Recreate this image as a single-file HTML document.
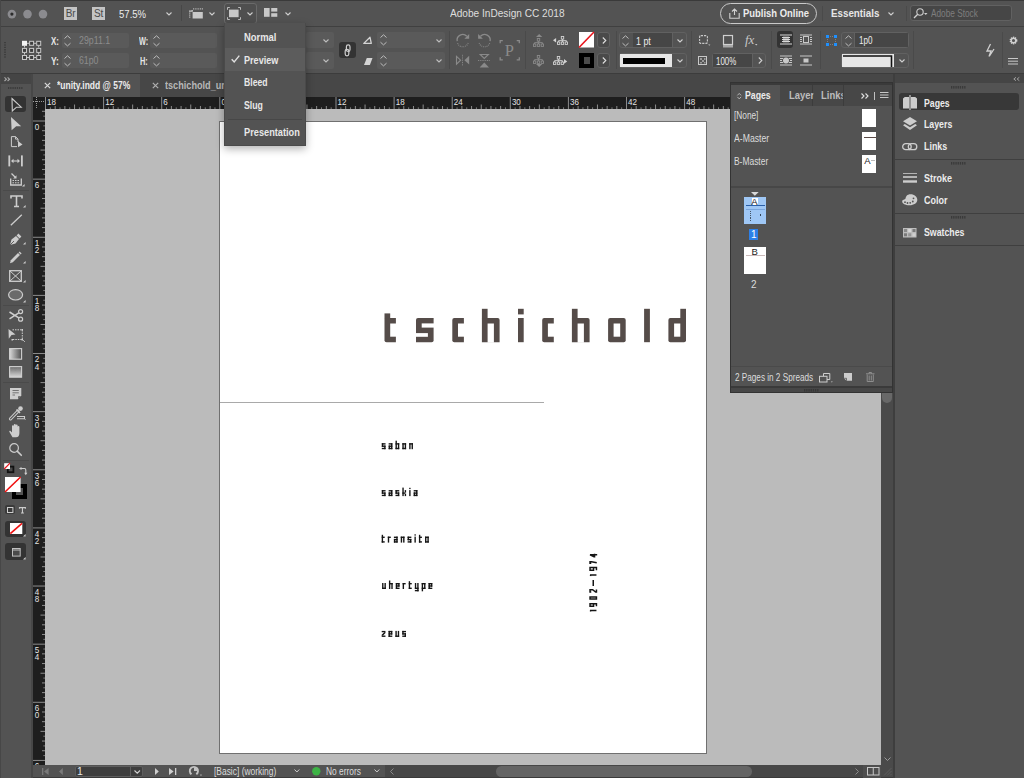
<!DOCTYPE html><html><head><meta charset="utf-8"><style>
*{margin:0;padding:0;box-sizing:border-box}
html,body{width:1024px;height:778px;overflow:hidden;background:#535353;font-family:"Liberation Sans",sans-serif;}
div{position:absolute}
svg{position:absolute;overflow:visible}
.t{white-space:nowrap;color:#e8e8e8;font-size:11px;line-height:12px}
</style></head><body>
<div style="left:0px;top:0px;width:1024px;height:27px;background:#535353;border-top:1px solid #3a3a3a"></div>
<div style="left:0px;top:26px;width:1024px;height:1px;background:#404040"></div>
<div style="left:0px;top:27px;width:1024px;height:46px;background:#535353"></div>
<div style="left:0px;top:73px;width:1024px;height:1px;background:#3c3c3c"></div>
<div style="left:0px;top:74px;width:32px;height:704px;background:#535353"></div>
<div style="left:0px;top:74px;width:32px;height:10px;background:#454545"></div>
<div style="left:30.8px;top:74px;width:2.2px;height:704px;background:#474747"></div>
<div style="left:0px;top:0px;width:1px;height:778px;background:#474747"></div>
<div style="left:33px;top:74px;width:860px;height:23px;background:#474747"></div>
<div style="left:33px;top:74px;width:107px;height:23px;background:#535353"></div>
<div style="left:33px;top:97px;width:848px;height:12px;background:#1e1e1e"></div>
<div style="left:33px;top:109px;width:12px;height:656px;background:#1e1e1e"></div>
<div style="left:45px;top:109px;width:836px;height:656px;background:#bbbbbb"></div>
<div style="left:219px;top:121px;width:488px;height:633px;background:#fff;border:1px solid #707070"></div>
<div style="left:881px;top:97px;width:12px;height:668px;background:#4a4a4a"></div>
<div style="left:33px;top:765px;width:352px;height:13px;background:#535353"></div>
<div style="left:385px;top:765px;width:496px;height:13px;background:#474747"></div>
<div style="left:881px;top:765px;width:12px;height:13px;background:#4a4a4a"></div>
<div style="left:33px;top:777px;width:860px;height:1px;background:#3a3a3a"></div>
<div style="left:893px;top:74px;width:2px;height:704px;background:#3e3e3e"></div>
<div style="left:895px;top:74px;width:129px;height:704px;background:#535353"></div>
<div style="left:895px;top:74px;width:129px;height:9.4px;background:#454545"></div>
<svg style="left:0;top:0" width="1024" height="778"><path d="M384.50 318.00H395.90V342.20H386.50Q384.50 342.20 384.50 340.20V318.00Z" fill="#554c49"/><rect x="384.50" y="313.40" width="5.70" height="4.70" fill="#554c49"/><rect x="390.20" y="323.50" width="6.20" height="13.20" fill="#fff"/><path d="M418.00 318.00H433.60V340.20Q433.60 342.20 431.60 342.20H416.00V320.00Q416.00 318.00 418.00 318.00Z" fill="#554c49"/><rect x="421.70" y="323.40" width="12.40" height="4.20" fill="#fff"/><rect x="415.50" y="333.10" width="12.40" height="3.70" fill="#fff"/><path d="M454.30 318.00H463.90V342.20H454.30Q452.30 342.20 452.30 340.20V320.00Q452.30 318.00 454.30 318.00Z" fill="#554c49"/><rect x="458.00" y="323.50" width="6.40" height="13.20" fill="#fff"/><path d="M481.90 318.00H497.60Q499.60 318.00 499.60 320.00V342.20H481.90V318.00Z" fill="#554c49"/><rect x="481.90" y="308.80" width="5.70" height="9.30" fill="#554c49"/><rect x="487.60" y="323.50" width="6.30" height="19.20" fill="#fff"/><rect x="518.00" y="308.80" width="5.70" height="5.60" fill="#554c49"/><rect x="518.00" y="318.00" width="5.70" height="24.20" fill="#554c49"/><path d="M544.20 318.00H553.80V342.20H544.20Q542.20 342.20 542.20 340.20V320.00Q542.20 318.00 544.20 318.00Z" fill="#554c49"/><rect x="547.90" y="323.50" width="6.40" height="13.20" fill="#fff"/><path d="M571.90 318.00H587.60Q589.60 318.00 589.60 320.00V342.20H571.90V318.00Z" fill="#554c49"/><rect x="571.90" y="308.80" width="5.70" height="9.30" fill="#554c49"/><rect x="577.60" y="323.50" width="6.30" height="19.20" fill="#fff"/><path d="M610.10 318.00H623.70Q625.70 318.00 625.70 320.00V340.20Q625.70 342.20 623.70 342.20H610.10Q608.10 342.20 608.10 340.20V320.00Q608.10 318.00 610.10 318.00Z" fill="#554c49"/><rect x="613.60" y="323.50" width="6.60" height="13.20" fill="#fff"/><rect x="644.10" y="308.80" width="5.80" height="33.40" fill="#554c49"/><path d="M670.40 318.00H686.00V340.20Q686.00 342.20 684.00 342.20H670.40Q668.40 342.20 668.40 340.20V320.00Q668.40 318.00 670.40 318.00Z" fill="#554c49"/><rect x="680.30" y="308.80" width="5.70" height="9.30" fill="#554c49"/><rect x="674.10" y="323.50" width="6.20" height="13.20" fill="#fff"/></svg>
<div style="left:220px;top:402px;width:324.2px;height:1px;background:#a9a9a9"></div>
<svg style="left:0;top:0" width="1024" height="778"><g fill="#151515"><rect x="381.80" y="443.20" width="3.75" height="1.38"/><rect x="381.80" y="443.20" width="1.38" height="3.69"/><rect x="381.80" y="445.51" width="3.75" height="1.38"/><rect x="384.17" y="445.51" width="1.38" height="3.69"/><rect x="381.80" y="447.82" width="3.75" height="1.38"/><rect x="388.65" y="443.20" width="3.75" height="1.38"/><rect x="391.02" y="443.20" width="1.38" height="6.00"/><rect x="388.65" y="445.51" width="3.75" height="1.38"/><rect x="388.65" y="445.51" width="1.38" height="3.69"/><rect x="388.65" y="447.82" width="3.75" height="1.38"/><rect x="395.50" y="440.70" width="1.38" height="8.50"/><rect x="395.50" y="443.20" width="3.75" height="1.38"/><rect x="397.87" y="443.20" width="1.38" height="6.00"/><rect x="395.50" y="447.82" width="3.75" height="1.38"/><rect x="402.35" y="443.20" width="3.75" height="1.38"/><rect x="402.35" y="443.20" width="1.38" height="6.00"/><rect x="404.72" y="443.20" width="1.38" height="6.00"/><rect x="402.35" y="447.82" width="3.75" height="1.38"/><rect x="409.20" y="443.20" width="1.38" height="6.00"/><rect x="409.20" y="443.20" width="3.75" height="1.38"/><rect x="411.57" y="443.20" width="1.38" height="6.00"/></g><g fill="#151515"><rect x="381.80" y="490.10" width="3.75" height="1.38"/><rect x="381.80" y="490.10" width="1.38" height="3.69"/><rect x="381.80" y="492.41" width="3.75" height="1.38"/><rect x="384.17" y="492.41" width="1.38" height="3.69"/><rect x="381.80" y="494.72" width="3.75" height="1.38"/><rect x="388.65" y="490.10" width="3.75" height="1.38"/><rect x="391.02" y="490.10" width="1.38" height="6.00"/><rect x="388.65" y="492.41" width="3.75" height="1.38"/><rect x="388.65" y="492.41" width="1.38" height="3.69"/><rect x="388.65" y="494.72" width="3.75" height="1.38"/><rect x="395.50" y="490.10" width="3.75" height="1.38"/><rect x="395.50" y="490.10" width="1.38" height="3.69"/><rect x="395.50" y="492.41" width="3.75" height="1.38"/><rect x="397.87" y="492.41" width="1.38" height="3.69"/><rect x="395.50" y="494.72" width="3.75" height="1.38"/><rect x="402.35" y="487.60" width="1.38" height="8.50"/><rect x="402.35" y="492.41" width="2.75" height="1.38"/><rect x="404.72" y="490.10" width="1.38" height="2.51"/><rect x="404.72" y="493.59" width="1.38" height="2.51"/><rect x="409.20" y="487.80" width="1.38" height="1.30"/><rect x="409.20" y="490.10" width="1.38" height="6.00"/><rect x="413.68" y="490.10" width="3.75" height="1.38"/><rect x="416.05" y="490.10" width="1.38" height="6.00"/><rect x="413.68" y="492.41" width="3.75" height="1.38"/><rect x="413.68" y="492.41" width="1.38" height="3.69"/><rect x="413.68" y="494.72" width="3.75" height="1.38"/></g><g fill="#151515"><rect x="381.70" y="534.80" width="1.38" height="7.80"/><rect x="381.70" y="536.60" width="3.00" height="1.38"/><rect x="381.70" y="541.22" width="3.00" height="1.38"/><rect x="387.80" y="536.60" width="1.38" height="6.00"/><rect x="387.80" y="536.60" width="3.00" height="1.38"/><rect x="393.90" y="536.60" width="3.75" height="1.38"/><rect x="396.27" y="536.60" width="1.38" height="6.00"/><rect x="393.90" y="538.91" width="3.75" height="1.38"/><rect x="393.90" y="538.91" width="1.38" height="3.69"/><rect x="393.90" y="541.22" width="3.75" height="1.38"/><rect x="400.75" y="536.60" width="1.38" height="6.00"/><rect x="400.75" y="536.60" width="3.75" height="1.38"/><rect x="403.12" y="536.60" width="1.38" height="6.00"/><rect x="407.60" y="536.60" width="3.75" height="1.38"/><rect x="407.60" y="536.60" width="1.38" height="3.69"/><rect x="407.60" y="538.91" width="3.75" height="1.38"/><rect x="409.97" y="538.91" width="1.38" height="3.69"/><rect x="407.60" y="541.22" width="3.75" height="1.38"/><rect x="414.45" y="534.30" width="1.38" height="1.30"/><rect x="414.45" y="536.60" width="1.38" height="6.00"/><rect x="418.93" y="534.80" width="1.38" height="7.80"/><rect x="418.93" y="536.60" width="3.00" height="1.38"/><rect x="418.93" y="541.22" width="3.00" height="1.38"/><rect x="425.03" y="536.60" width="3.75" height="1.38"/><rect x="425.03" y="536.60" width="1.38" height="6.00"/><rect x="427.40" y="536.60" width="1.38" height="6.00"/><rect x="425.03" y="541.22" width="3.75" height="1.38"/></g><g fill="#151515"><rect x="382.10" y="583.00" width="1.38" height="6.00"/><rect x="384.47" y="583.00" width="1.38" height="6.00"/><rect x="382.10" y="587.62" width="3.75" height="1.38"/><rect x="388.95" y="580.50" width="1.38" height="8.50"/><rect x="388.95" y="583.00" width="3.75" height="1.38"/><rect x="391.32" y="583.00" width="1.38" height="6.00"/><rect x="395.80" y="583.00" width="3.75" height="1.38"/><rect x="395.80" y="583.00" width="1.38" height="6.00"/><rect x="395.80" y="585.31" width="3.75" height="1.38"/><rect x="398.17" y="583.00" width="1.38" height="3.69"/><rect x="395.80" y="587.62" width="3.75" height="1.38"/><rect x="402.65" y="583.00" width="1.38" height="6.00"/><rect x="402.65" y="583.00" width="3.00" height="1.38"/><rect x="408.75" y="581.20" width="1.38" height="7.80"/><rect x="408.75" y="583.00" width="3.00" height="1.38"/><rect x="408.75" y="587.62" width="3.00" height="1.38"/><rect x="414.85" y="583.00" width="1.38" height="6.00"/><rect x="417.22" y="583.00" width="1.38" height="8.30"/><rect x="414.85" y="587.62" width="3.75" height="1.38"/><rect x="414.85" y="589.92" width="3.75" height="1.38"/><rect x="421.70" y="583.00" width="1.38" height="8.30"/><rect x="421.70" y="583.00" width="3.75" height="1.38"/><rect x="424.07" y="583.00" width="1.38" height="6.00"/><rect x="421.70" y="587.62" width="3.75" height="1.38"/><rect x="428.55" y="583.00" width="3.75" height="1.38"/><rect x="428.55" y="583.00" width="1.38" height="6.00"/><rect x="428.55" y="585.31" width="3.75" height="1.38"/><rect x="430.92" y="583.00" width="1.38" height="3.69"/><rect x="428.55" y="587.62" width="3.75" height="1.38"/></g><g fill="#151515"><rect x="381.70" y="630.90" width="3.75" height="1.38"/><rect x="381.70" y="635.52" width="3.75" height="1.38"/><rect x="384.07" y="632.18" width="1.38" height="1.10"/><rect x="383.60" y="632.65" width="1.38" height="1.10"/><rect x="383.12" y="633.12" width="1.38" height="1.10"/><rect x="382.65" y="633.58" width="1.38" height="1.10"/><rect x="382.17" y="634.05" width="1.38" height="1.10"/><rect x="381.70" y="634.52" width="1.38" height="1.10"/><rect x="388.55" y="630.90" width="3.75" height="1.38"/><rect x="388.55" y="630.90" width="1.38" height="6.00"/><rect x="388.55" y="633.21" width="3.75" height="1.38"/><rect x="390.92" y="630.90" width="1.38" height="3.69"/><rect x="388.55" y="635.52" width="3.75" height="1.38"/><rect x="395.40" y="630.90" width="1.38" height="6.00"/><rect x="397.77" y="630.90" width="1.38" height="6.00"/><rect x="395.40" y="635.52" width="3.75" height="1.38"/><rect x="402.25" y="630.90" width="3.75" height="1.38"/><rect x="402.25" y="630.90" width="1.38" height="3.69"/><rect x="402.25" y="633.21" width="3.75" height="1.38"/><rect x="404.62" y="633.21" width="1.38" height="3.69"/><rect x="402.25" y="635.52" width="3.75" height="1.38"/></g><path d="M1.05 -0.75V-7.15L0.45 -5.85M5.25 -0.75H7.75V-7.15H5.25V-3.65H7.75M12.45 -7.15H14.45V-0.75H12.45ZM19.45 -5.95V-7.15H21.85V-4.55L19.45 -1.55V-0.75H22.05M25.40 -3.95H31.60M36.55 -0.75V-7.15L36.05 -5.85M41.35 -0.75H43.95V-7.15H41.35V-3.65H43.95M48.25 -5.95V-7.15H49.75V-5.65L48.75 -0.45M56.65 0.00V-7.15L54.75 -3.15V-2.65H57.65" fill="none" stroke="#151515" stroke-width="1.5" transform="translate(597.2 611.5) rotate(-90)"/></svg>
<svg style="left:0;top:0" width="60" height="27"><circle cx="11.9" cy="14.1" r="4.3" fill="#8b8b8f"/><circle cx="11.9" cy="14.1" r="1.6" fill="#2b2b2b"/><circle cx="27.5" cy="14.1" r="4.3" fill="#8b8b8f"/><circle cx="43" cy="14.1" r="4.3" fill="#8b8b8f"/></svg>
<div style="left:64px;top:7px;width:13px;height:13px;background:#c4c4c4;color:#4a4a4a;font-size:10px;line-height:13px;text-align:center;letter-spacing:-0.2px">Br</div>
<div style="left:92px;top:7px;width:13px;height:13px;background:#c4c4c4;color:#4a4a4a;font-size:10px;line-height:13px;text-align:center;letter-spacing:-0.2px">St</div>
<svg style="left:165.5px;top:12px" width="6" height="4" viewBox="0 0 6 4"><path d="M0.5 0.5 L3 3 L5.5 0.5" fill="none" stroke="#cfcfcf" stroke-width="1.1"/></svg>
<div style="left:181px;top:5px;width:1px;height:16px;background:#474747"></div>
<svg style="left:188px;top:7px" width="16" height="13" viewBox="0 0 16 13"><rect x="4.6" y="5" width="10.2" height="6.5" fill="#c8c8c8"/><path d="M5.2 1.9h1M7.4 1.9h1M9.6 1.9h1M11.8 1.9h1M13.8 1.9h1M1.3 6.2h1M1.3 8.2h1M1.3 10.2h1M1 4.2H4.2V3" stroke="#c8c8c8" stroke-width="1.3" fill="none"/></svg>
<svg style="left:209px;top:12px" width="6" height="4" viewBox="0 0 6 4"><path d="M0.5 0.5 L3 3 L5.5 0.5" fill="none" stroke="#cfcfcf" stroke-width="1.1"/></svg>
<div style="left:224px;top:3px;width:33px;height:21px;border:1px solid #6a6a6a;border-radius:3px;background:#4f4f4f"></div>
<svg style="left:227px;top:7px" width="14" height="13" viewBox="0 0 14 13"><rect x="2" y="2.6" width="9.6" height="7.6" fill="#c8c8c8"/><path d="M0.5 2.8V0.5H2.8M11.2 0.5H13.5V2.8M13.5 10.2V12.5H11.2M2.8 12.5H0.5V10.2" fill="none" stroke="#c8c8c8" stroke-width="0.9"/></svg>
<svg style="left:246.5px;top:12px" width="6" height="4" viewBox="0 0 6 4"><path d="M0.5 0.5 L3 3 L5.5 0.5" fill="none" stroke="#cfcfcf" stroke-width="1.1"/></svg>
<svg style="left:264px;top:8.4px" width="14" height="9" viewBox="0 0 14 9"><rect x="0" y="0" width="5.6" height="8.8" fill="#c8c8c8"/><rect x="7.2" y="0" width="6.1" height="3.6" fill="#c8c8c8"/><rect x="7.2" y="5.2" width="6.1" height="3.6" fill="#c8c8c8"/></svg>
<svg style="left:284.5px;top:12px" width="6" height="4" viewBox="0 0 6 4"><path d="M0.5 0.5 L3 3 L5.5 0.5" fill="none" stroke="#cfcfcf" stroke-width="1.1"/></svg>
<div style="left:720px;top:3px;width:97px;height:21px;border:1px solid #c9c9c9;border-radius:11px"></div>
<svg style="left:729px;top:8px" width="11" height="11" viewBox="0 0 11 11"><path d="M5.5 7V1M3 3.5L5.5 1L8 3.5M0.8 5v5.2h9.4V5" fill="none" stroke="#d0d0d0" stroke-width="1.1"/></svg>
<div style="left:822px;top:6px;width:1px;height:15px;background:#4a4a4a"></div>
<svg style="left:887.5px;top:12px" width="6" height="4" viewBox="0 0 6 4"><path d="M0.5 0.5 L3 3 L5.5 0.5" fill="none" stroke="#cfcfcf" stroke-width="1.1"/></svg>
<div style="left:906px;top:6px;width:1px;height:15px;background:#4a4a4a"></div>
<div style="left:910px;top:5px;width:102px;height:16px;background:#464646;border:1px solid #616161;border-radius:3px"></div>
<svg style="left:913px;top:8px" width="16" height="11" viewBox="0 0 16 11"><circle cx="7" cy="4" r="3.2" fill="none" stroke="#d0d0d0" stroke-width="1.1"/><path d="M4.7 6.3L1 10" stroke="#d0d0d0" stroke-width="1.3"/><path d="M11 5h3.5l-1.75 2z" fill="#d0d0d0"/></svg>
<svg style="left:4px;top:42px" width="3" height="17"><rect x="0" y="0.0" width="2" height="1.2" fill="#3e3e3e"/><rect x="0" y="2.4" width="2" height="1.2" fill="#3e3e3e"/><rect x="0" y="4.8" width="2" height="1.2" fill="#3e3e3e"/><rect x="0" y="7.199999999999999" width="2" height="1.2" fill="#3e3e3e"/><rect x="0" y="9.6" width="2" height="1.2" fill="#3e3e3e"/><rect x="0" y="12.0" width="2" height="1.2" fill="#3e3e3e"/><rect x="0" y="14.399999999999999" width="2" height="1.2" fill="#3e3e3e"/></svg>
<svg style="left:21px;top:40px" width="22" height="22" viewBox="0 0 22 22"><path d="M6 3.3H8M13.1 3.3H15.1M6 17.5H8M13.1 17.5H15.1M3.5 5.8V7.5M3.5 12.9V14.6M17.7 5.8V7.5M17.7 12.9V14.6" stroke="#c8c8c8" stroke-width="1"/><rect x="1.0" y="0.8" width="5" height="5" fill="#f4f4f4"/><rect x="8.6" y="1.3" width="4" height="4" fill="#3e3e3e" stroke="#c8c8c8" stroke-width="1"/><rect x="15.7" y="1.3" width="4" height="4" fill="#3e3e3e" stroke="#c8c8c8" stroke-width="1"/><rect x="1.5" y="8.4" width="4" height="4" fill="#3e3e3e" stroke="#c8c8c8" stroke-width="1"/><rect x="8.6" y="8.4" width="4" height="4" fill="#3e3e3e" stroke="#c8c8c8" stroke-width="1"/><rect x="15.7" y="8.4" width="4" height="4" fill="#3e3e3e" stroke="#c8c8c8" stroke-width="1"/><rect x="1.5" y="15.5" width="4" height="4" fill="#3e3e3e" stroke="#c8c8c8" stroke-width="1"/><rect x="8.6" y="15.5" width="4" height="4" fill="#3e3e3e" stroke="#c8c8c8" stroke-width="1"/><rect x="15.7" y="15.5" width="4" height="4" fill="#3e3e3e" stroke="#c8c8c8" stroke-width="1"/></svg>
<div style="left:61.5px;top:32.5px;width:67.5px;height:15.5px;background:#5a5a5a;border-radius:2px;"></div>
<div style="left:61.5px;top:52.7px;width:67.5px;height:15.7px;background:#5a5a5a;border-radius:2px;"></div>
<svg style="left:64px;top:34.5px" width="7" height="12" viewBox="0 0 7 12"><path d="M0.5 3.5L3.5 0.8L6.5 3.5M0.5 8.2L3.5 10.9L6.5 8.2" fill="none" stroke="#bdbdbd" stroke-width="1"/></svg>
<svg style="left:64px;top:54.8px" width="7" height="12" viewBox="0 0 7 12"><path d="M0.5 3.5L3.5 0.8L6.5 3.5M0.5 8.2L3.5 10.9L6.5 8.2" fill="none" stroke="#bdbdbd" stroke-width="1"/></svg>
<div style="left:149.8px;top:32.5px;width:67.5px;height:15.5px;background:#5a5a5a;border-radius:2px;"></div>
<div style="left:149.8px;top:52.7px;width:67.5px;height:15.7px;background:#5a5a5a;border-radius:2px;"></div>
<svg style="left:152.5px;top:34.5px" width="7" height="12" viewBox="0 0 7 12"><path d="M0.5 3.5L3.5 0.8L6.5 3.5M0.5 8.2L3.5 10.9L6.5 8.2" fill="none" stroke="#bdbdbd" stroke-width="1"/></svg>
<svg style="left:152.5px;top:54.8px" width="7" height="12" viewBox="0 0 7 12"><path d="M0.5 3.5L3.5 0.8L6.5 3.5M0.5 8.2L3.5 10.9L6.5 8.2" fill="none" stroke="#bdbdbd" stroke-width="1"/></svg>
<div style="left:306px;top:32px;width:27.6px;height:16.2px;background:#5a5a5a;border-radius:2px;"></div>
<div style="left:306px;top:52.2px;width:27.6px;height:16.4px;background:#5a5a5a;border-radius:2px;"></div>
<svg style="left:323px;top:38.5px" width="6" height="4" viewBox="0 0 6 4"><path d="M0.5 0.5 L3 3 L5.5 0.5" fill="none" stroke="#bdbdbd" stroke-width="1.1"/></svg>
<svg style="left:323px;top:58.5px" width="6" height="4" viewBox="0 0 6 4"><path d="M0.5 0.5 L3 3 L5.5 0.5" fill="none" stroke="#bdbdbd" stroke-width="1.1"/></svg>
<div style="left:338.7px;top:41.7px;width:17px;height:16.7px;background:#333;border-radius:3px"></div>
<svg style="left:343.5px;top:43.8px" width="8" height="13" viewBox="0 0 8 13"><rect x="2.4" y="0.9" width="3.6" height="6.6" rx="1.8" fill="none" stroke="#d0d0d0" stroke-width="1.2"/><rect x="1.2" y="5.3" width="3.6" height="6.6" rx="1.8" fill="none" stroke="#d0d0d0" stroke-width="1.2"/></svg>
<svg style="left:362px;top:36px" width="11" height="9" viewBox="0 0 11 9"><path d="M1.8 7.4L8 1.3L9.3 7.4Z" fill="none" stroke="#d4d4d4" stroke-width="1.3" stroke-linejoin="round"/></svg>
<svg style="left:363.5px;top:58px" width="9" height="7" viewBox="0 0 9 7"><path d="M2.8 0H8.5L5.9 7H0Z" fill="#d4d4d4"/></svg>
<div style="left:377px;top:32px;width:67.7px;height:16.2px;background:#5a5a5a;border-radius:2px;"></div>
<div style="left:377px;top:52.2px;width:67.7px;height:16.4px;background:#5a5a5a;border-radius:2px;"></div>
<svg style="left:380px;top:34px" width="7" height="12" viewBox="0 0 7 12"><path d="M0.5 3.5L3.5 0.8L6.5 3.5M0.5 8.2L3.5 10.9L6.5 8.2" fill="none" stroke="#bdbdbd" stroke-width="1"/></svg>
<svg style="left:380px;top:54.5px" width="7" height="12" viewBox="0 0 7 12"><path d="M0.5 3.5L3.5 0.8L6.5 3.5M0.5 8.2L3.5 10.9L6.5 8.2" fill="none" stroke="#bdbdbd" stroke-width="1"/></svg>
<svg style="left:436px;top:38.5px" width="6" height="4" viewBox="0 0 6 4"><path d="M0.5 0.5 L3 3 L5.5 0.5" fill="none" stroke="#bdbdbd" stroke-width="1.1"/></svg>
<svg style="left:436px;top:58.5px" width="6" height="4" viewBox="0 0 6 4"><path d="M0.5 0.5 L3 3 L5.5 0.5" fill="none" stroke="#bdbdbd" stroke-width="1.1"/></svg>
<div style="left:449px;top:31px;width:1px;height:38px;background:#4a4a4a"></div>
<svg style="left:0;top:0" width="530" height="75"><path d="M457.2 41.2A5.6 5.6 0 0 1 466.8 36.3" fill="none" stroke="#8a8a8a" stroke-width="1.3"/><path d="M469.2 34V38.8H464.4Z" fill="#8a8a8a"/><path d="M457.6 43.2A5.6 5.6 0 0 0 468.3 42.5" fill="none" stroke="#8a8a8a" stroke-width="1.1" stroke-dasharray="0.9 0.9"/><path d="M490.1 41.2A5.6 5.6 0 0 0 480.5 36.3" fill="none" stroke="#8a8a8a" stroke-width="1.3"/><path d="M478.1 34V38.8H482.9Z" fill="#8a8a8a"/><path d="M489.7 43.2A5.6 5.6 0 0 1 479 42.5" fill="none" stroke="#8a8a8a" stroke-width="1.1" stroke-dasharray="0.9 0.9"/><path d="M456.5 56.3L460.6 60.2L456.5 64.1Z" fill="none" stroke="#8a8a8a" stroke-width="1.1"/><path d="M469.2 55.8V64.6L464.4 60.2Z" fill="#8a8a8a"/><path d="M462.5 54.8V66" stroke="#8a8a8a" stroke-width="0.9" stroke-dasharray="1 0.8"/><path d="M480.2 54.5H488.4L484.3 58.4Z" fill="none" stroke="#8a8a8a" stroke-width="1.1"/><path d="M479.6 67.5H489L484.3 62.4Z" fill="#8a8a8a"/><path d="M478 60.5H490.2" stroke="#8a8a8a" stroke-width="0.9" stroke-dasharray="1 0.8"/><path d="M500.2 43.3V40.7H502.8M516.7 40.7H519.3V43.3M519.3 57.2V59.8H516.7M502.8 59.8H500.2V57.2" fill="none" stroke="#8a8a8a" stroke-width="1.3"/><text x="504.8" y="55.6" font-family="Liberation Serif" font-size="16.5" fill="#8a8a8a">P</text></svg>
<div style="left:525px;top:31px;width:1px;height:38px;background:#4a4a4a"></div>
<svg style="left:533px;top:38px" width="11" height="9" viewBox="0 0 11 9"><rect x="4.3" y="0.5" width="2.4" height="2.6" fill="none" stroke="#8a8a8a" stroke-width="0.9"/><path d="M5.5 3.1V4.6M1.6 4.6H9.4M1.6 4.6V6M5.5 4.6V6M9.4 4.6V6" stroke="#8a8a8a" stroke-width="0.9" fill="none"/><rect x="0.5" y="6" width="2.3" height="2.4" fill="none" stroke="#8a8a8a" stroke-width="0.9"/><rect x="4.35" y="6" width="2.3" height="2.4" fill="none" stroke="#8a8a8a" stroke-width="0.9"/><rect x="8.2" y="6" width="2.3" height="2.4" fill="none" stroke="#8a8a8a" stroke-width="0.9"/></svg>
<svg style="left:535.5px;top:33.7px" width="7" height="3.5"><path d="M0 3.1H6.3L3.15 0Z" fill="#8a8a8a"/></svg>
<svg style="left:533px;top:55px" width="11" height="9" viewBox="0 0 11 9"><rect x="4.3" y="0.5" width="2.4" height="2.6" fill="none" stroke="#8a8a8a" stroke-width="0.9"/><path d="M5.5 3.1V4.6M1.6 4.6H9.4M1.6 4.6V6M5.5 4.6V6M9.4 4.6V6" stroke="#8a8a8a" stroke-width="0.9" fill="none"/><rect x="0.5" y="6" width="2.3" height="2.4" fill="none" stroke="#8a8a8a" stroke-width="0.9"/><rect x="4.35" y="6" width="2.3" height="2.4" fill="none" stroke="#8a8a8a" stroke-width="0.9"/><rect x="8.2" y="6" width="2.3" height="2.4" fill="none" stroke="#8a8a8a" stroke-width="0.9"/></svg>
<svg style="left:535.5px;top:64.2px" width="7" height="3.5"><path d="M0 0H6.3L3.15 3.1Z" fill="#8a8a8a"/></svg>
<svg style="left:556.6px;top:35.6px" width="11" height="9" viewBox="0 0 11 9"><rect x="4.3" y="0.5" width="2.4" height="2.6" fill="none" stroke="#d2d2d2" stroke-width="0.9"/><path d="M5.5 3.1V4.6M1.6 4.6H9.4M1.6 4.6V6M5.5 4.6V6M9.4 4.6V6" stroke="#d2d2d2" stroke-width="0.9" fill="none"/><rect x="0.5" y="6" width="2.3" height="2.4" fill="none" stroke="#d2d2d2" stroke-width="0.9"/><rect x="4.35" y="6" width="2.3" height="2.4" fill="none" stroke="#d2d2d2" stroke-width="0.9"/><rect x="8.2" y="6" width="2.3" height="2.4" fill="none" stroke="#d2d2d2" stroke-width="0.9"/></svg>
<svg style="left:552.8px;top:38.1px" width="3.5" height="5"><path d="M3.1 0V4.4L0 2.2Z" fill="#d2d2d2"/></svg>
<svg style="left:552.6px;top:56.3px" width="11" height="9" viewBox="0 0 11 9"><rect x="4.3" y="0.5" width="2.4" height="2.6" fill="none" stroke="#d2d2d2" stroke-width="0.9"/><path d="M5.5 3.1V4.6M1.6 4.6H9.4M1.6 4.6V6M5.5 4.6V6M9.4 4.6V6" stroke="#d2d2d2" stroke-width="0.9" fill="none"/><rect x="0.5" y="6" width="2.3" height="2.4" fill="none" stroke="#d2d2d2" stroke-width="0.9"/><rect x="4.35" y="6" width="2.3" height="2.4" fill="none" stroke="#d2d2d2" stroke-width="0.9"/><rect x="8.2" y="6" width="2.3" height="2.4" fill="none" stroke="#d2d2d2" stroke-width="0.9"/></svg>
<svg style="left:564px;top:59.2px" width="3.5" height="5"><path d="M0 0V4.8L3.2 2.4Z" fill="#d2d2d2"/></svg>
<svg style="left:579px;top:32.4px" width="15" height="15.5" viewBox="0 0 15 15.5"><rect width="15" height="15.5" fill="#fff"/><path d="M0 15.5L15 0" stroke="#e8141c" stroke-width="1.6"/></svg>
<div style="left:579px;top:52.8px;width:15px;height:15.2px;background:#000"></div>
<div style="left:583.5px;top:57px;width:6px;height:6.5px;background:#4b4b4b"></div>
<div style="left:597px;top:32.4px;width:13.2px;height:15.5px;border:1px solid #626262;border-radius:3px;background:#4a4a4a"></div>
<div style="left:597px;top:52.8px;width:13.2px;height:15.2px;border:1px solid #626262;border-radius:3px;background:#4a4a4a"></div>
<svg style="left:601.5px;top:37px" width="5" height="7"><path d="M0.8 0.5L3.8 3.5L0.8 6.5" fill="none" stroke="#e0e0e0" stroke-width="1.1"/></svg>
<svg style="left:601.5px;top:57.2px" width="5" height="7"><path d="M0.8 0.5L3.8 3.5L0.8 6.5" fill="none" stroke="#e0e0e0" stroke-width="1.1"/></svg>
<div style="left:615.5px;top:31px;width:1px;height:38px;background:#4a4a4a"></div>
<div style="left:619px;top:32.4px;width:67.5px;height:15.8px;border:1px solid #616161;border-radius:3px;background:#535353"></div>
<div style="left:632.5px;top:33.4px;width:40px;height:13.8px;background:#464646"></div>
<div style="left:672.4px;top:33.4px;width:1px;height:13.8px;background:#616161"></div>
<svg style="left:622.2px;top:34.5px" width="7" height="12" viewBox="0 0 7 12"><path d="M0.5 3.5L3.5 0.8L6.5 3.5M0.5 8.2L3.5 10.9L6.5 8.2" fill="none" stroke="#bdbdbd" stroke-width="1"/></svg>
<svg style="left:676.5px;top:38.5px" width="6" height="4" viewBox="0 0 6 4"><path d="M0.5 0.5 L3 3 L5.5 0.5" fill="none" stroke="#d0d0d0" stroke-width="1.1"/></svg>
<div style="left:619px;top:52.8px;width:67.5px;height:15.2px;border:1px solid #616161;border-radius:3px;background:#535353"></div>
<div style="left:620px;top:53.8px;width:52.4px;height:13.2px;background:#e6e6e6"></div>
<div style="left:622.7px;top:57.5px;width:42.5px;height:6.5px;background:#000"></div>
<svg style="left:676.5px;top:58.5px" width="6" height="4" viewBox="0 0 6 4"><path d="M0.5 0.5 L3 3 L5.5 0.5" fill="none" stroke="#d0d0d0" stroke-width="1.1"/></svg>
<div style="left:691.2px;top:31px;width:1px;height:38px;background:#4a4a4a"></div>
<svg style="left:699.3px;top:35.2px" width="12" height="11" viewBox="0 0 12 11"><rect x="0.6" y="0.6" width="7.8" height="7.8" rx="1.2" fill="none" stroke="#c8c8c8" stroke-width="1.1" stroke-dasharray="2.2 1"/><path d="M9.2 9.6h2.2l-1.1 1.1z" fill="#c8c8c8"/></svg>
<svg style="left:722.5px;top:34.5px" width="10" height="13" viewBox="0 0 10 13"><rect x="0.5" y="0.5" width="9" height="9" fill="none" stroke="#d0d0d0" stroke-width="1.2"/><rect x="0" y="10" width="10" height="2.5" fill="#a8a8a8"/></svg>
<div class="t" style="left:745px;top:33px;font-family:'Liberation Serif';font-style:italic;font-size:13px;line-height:14px;color:#c8c8c8">fx</div>
<svg style="left:755px;top:44px" width="3" height="2"><path d="M0 0h2.5l-1.25 1.5z" fill="#c8c8c8"/></svg>
<svg style="left:698px;top:56px" width="9" height="9" viewBox="0 0 9 9"><rect x="0.5" y="0.5" width="8" height="8" fill="none" stroke="#c8c8c8" stroke-width="1"/><path d="M2 2h2v2h-2zM4 4h2v2h-2zM2 6h2v1.5h-2zM6 2h1.5v2h-1.5zM6 6h1.5v1.5h-1.5z" fill="#9a9a9a"/></svg>
<div style="left:712.3px;top:52.8px;width:54px;height:15.2px;border:1px solid #616161;border-radius:3px;background:#535353"></div>
<div style="left:713.3px;top:53.8px;width:39px;height:13.2px;background:#464646"></div>
<div style="left:752.3px;top:53.8px;width:1px;height:13.2px;background:#616161"></div>
<svg style="left:757.5px;top:57.2px" width="5" height="7"><path d="M0.8 0.5L3.8 3.5L0.8 6.5" fill="none" stroke="#d0d0d0" stroke-width="1.1"/></svg>
<div style="left:771.4px;top:31px;width:1px;height:38px;background:#4a4a4a"></div>
<div style="left:776.7px;top:31.2px;width:16.5px;height:17px;background:#333;border-radius:3px"></div>
<svg style="left:779.5px;top:34px" width="12" height="11" viewBox="0 0 12 11"><path d="M0 1h12M0 10h12M2 3.5h8M2 5.5h8M2 7.5h8" stroke="#d8d8d8" stroke-width="1"/><rect x="3" y="2.5" width="6" height="6" fill="#d8d8d8" opacity="0.6"/></svg>
<svg style="left:800px;top:34px" width="12" height="11" viewBox="0 0 12 11"><path d="M0 1h12M0 10h12M0 3.5h2M10 3.5h2M0 5.5h2M10 5.5h2M0 7.5h2M10 7.5h2" stroke="#c8c8c8" stroke-width="1"/><rect x="3.5" y="2.5" width="5" height="6" fill="none" stroke="#c8c8c8" stroke-width="1"/></svg>
<svg style="left:779.5px;top:54.5px" width="12" height="11" viewBox="0 0 12 11"><path d="M0 1h12M0 10h12M0 3.5h3M9 3.5h3M0 5.5h2M10 5.5h2M0 7.5h3M9 7.5h3" stroke="#c8c8c8" stroke-width="1"/><circle cx="6" cy="5.5" r="3" fill="#c8c8c8"/></svg>
<svg style="left:800px;top:54.5px" width="12" height="11" viewBox="0 0 12 11"><path d="M0 1h12M0 10h12" stroke="#c8c8c8" stroke-width="1"/><rect x="3.5" y="3.5" width="5" height="4" fill="#c8c8c8"/></svg>
<div style="left:820.1px;top:31px;width:1px;height:38px;background:#4a4a4a"></div>
<svg style="left:825.9px;top:35.2px" width="11" height="11" viewBox="0 0 11 11"><path d="M2 1.5H9M2 9.5H9M1.5 2V9M9.5 2V9" stroke="#8a8a8a" stroke-width="0.8" stroke-dasharray="1 1"/><rect x="0" y="0" width="3" height="3" fill="#1e90ff"/><rect x="8" y="0" width="3" height="3" fill="#1e90ff"/><rect x="0" y="8" width="3" height="3" fill="#1e90ff"/><rect x="8" y="8" width="3" height="3" fill="#1e90ff"/></svg>
<div style="left:841.2px;top:32.4px;width:67.7px;height:15.8px;border:1px solid #616161;border-radius:3px;background:#535353"></div>
<div style="left:855px;top:33.4px;width:52.9px;height:13.8px;background:#464646"></div>
<div style="left:854px;top:33.4px;width:1px;height:13.8px;background:#616161"></div>
<svg style="left:844.5px;top:34.5px" width="7" height="12" viewBox="0 0 7 12"><path d="M0.5 3.5L3.5 0.8L6.5 3.5M0.5 8.2L3.5 10.9L6.5 8.2" fill="none" stroke="#bdbdbd" stroke-width="1"/></svg>
<div style="left:841.2px;top:52.8px;width:67.7px;height:15.2px;border:1px solid #616161;border-radius:3px;background:#535353"></div>
<div style="left:842.2px;top:53.8px;width:52.3px;height:13.2px;background:#e6e6e6"></div>
<svg style="left:843px;top:54.5px" width="50" height="12"><path d="M0 1H48.5V12" fill="none" stroke="#111" stroke-width="1.6"/></svg>
<svg style="left:898.5px;top:58.5px" width="6" height="4" viewBox="0 0 6 4"><path d="M0.5 0.5 L3 3 L5.5 0.5" fill="none" stroke="#d0d0d0" stroke-width="1.1"/></svg>
<div style="left:913px;top:31px;width:1px;height:38px;background:#4a4a4a"></div>
<svg style="left:985.5px;top:43.7px" width="9" height="13" viewBox="0 0 9 13"><path d="M4.5 0L1 7H5L3 12.5M8 5L3.5 12" fill="none" stroke="#d0d0d0" stroke-width="1.3"/></svg>
<div style="left:1001.5px;top:32px;width:1px;height:36px;background:#4a4a4a"></div>
<svg style="left:1008.6px;top:36.2px" width="9" height="9" viewBox="0 0 9 9"><circle cx="4.5" cy="4.5" r="3" fill="none" stroke="#d0d0d0" stroke-width="1.8" stroke-dasharray="1.2 0.7"/><circle cx="4.5" cy="4.5" r="2.3" fill="none" stroke="#d0d0d0" stroke-width="1.4"/></svg>
<svg style="left:1008px;top:57.8px" width="10" height="7"><path d="M0 0.5H10M0 3.2H10M0 6H10" stroke="#c8c8c8" stroke-width="1"/></svg>
<svg style="left:0;top:97px;overflow:hidden" width="881" height="12"><rect x="45.00" y="0" width="1" height="12" fill="#8c8c8c"/><rect x="49.84" y="10.3" width="1" height="1.7" fill="#7a7a7a"/><rect x="54.68" y="9" width="1" height="3" fill="#8c8c8c"/><rect x="59.53" y="10.3" width="1" height="1.7" fill="#7a7a7a"/><rect x="64.37" y="9" width="1" height="3" fill="#8c8c8c"/><rect x="69.21" y="10.3" width="1" height="1.7" fill="#7a7a7a"/><rect x="74.05" y="7.5" width="1" height="4.5" fill="#8c8c8c"/><rect x="78.89" y="10.3" width="1" height="1.7" fill="#7a7a7a"/><rect x="83.73" y="9" width="1" height="3" fill="#8c8c8c"/><rect x="88.58" y="10.3" width="1" height="1.7" fill="#7a7a7a"/><rect x="93.42" y="9" width="1" height="3" fill="#8c8c8c"/><rect x="98.26" y="10.3" width="1" height="1.7" fill="#7a7a7a"/><rect x="103.10" y="0" width="1" height="12" fill="#8c8c8c"/><rect x="107.94" y="10.3" width="1" height="1.7" fill="#7a7a7a"/><rect x="112.78" y="9" width="1" height="3" fill="#8c8c8c"/><rect x="117.63" y="10.3" width="1" height="1.7" fill="#7a7a7a"/><rect x="122.47" y="9" width="1" height="3" fill="#8c8c8c"/><rect x="127.31" y="10.3" width="1" height="1.7" fill="#7a7a7a"/><rect x="132.15" y="7.5" width="1" height="4.5" fill="#8c8c8c"/><rect x="136.99" y="10.3" width="1" height="1.7" fill="#7a7a7a"/><rect x="141.83" y="9" width="1" height="3" fill="#8c8c8c"/><rect x="146.68" y="10.3" width="1" height="1.7" fill="#7a7a7a"/><rect x="151.52" y="9" width="1" height="3" fill="#8c8c8c"/><rect x="156.36" y="10.3" width="1" height="1.7" fill="#7a7a7a"/><rect x="161.20" y="0" width="1" height="12" fill="#8c8c8c"/><rect x="166.04" y="10.3" width="1" height="1.7" fill="#7a7a7a"/><rect x="170.88" y="9" width="1" height="3" fill="#8c8c8c"/><rect x="175.73" y="10.3" width="1" height="1.7" fill="#7a7a7a"/><rect x="180.57" y="9" width="1" height="3" fill="#8c8c8c"/><rect x="185.41" y="10.3" width="1" height="1.7" fill="#7a7a7a"/><rect x="190.25" y="7.5" width="1" height="4.5" fill="#8c8c8c"/><rect x="195.09" y="10.3" width="1" height="1.7" fill="#7a7a7a"/><rect x="199.93" y="9" width="1" height="3" fill="#8c8c8c"/><rect x="204.78" y="10.3" width="1" height="1.7" fill="#7a7a7a"/><rect x="209.62" y="9" width="1" height="3" fill="#8c8c8c"/><rect x="214.46" y="10.3" width="1" height="1.7" fill="#7a7a7a"/><rect x="219.30" y="0" width="1" height="12" fill="#8c8c8c"/><rect x="224.14" y="10.3" width="1" height="1.7" fill="#7a7a7a"/><rect x="228.98" y="9" width="1" height="3" fill="#8c8c8c"/><rect x="233.83" y="10.3" width="1" height="1.7" fill="#7a7a7a"/><rect x="238.67" y="9" width="1" height="3" fill="#8c8c8c"/><rect x="243.51" y="10.3" width="1" height="1.7" fill="#7a7a7a"/><rect x="248.35" y="7.5" width="1" height="4.5" fill="#8c8c8c"/><rect x="253.19" y="10.3" width="1" height="1.7" fill="#7a7a7a"/><rect x="258.03" y="9" width="1" height="3" fill="#8c8c8c"/><rect x="262.88" y="10.3" width="1" height="1.7" fill="#7a7a7a"/><rect x="267.72" y="9" width="1" height="3" fill="#8c8c8c"/><rect x="272.56" y="10.3" width="1" height="1.7" fill="#7a7a7a"/><rect x="277.40" y="0" width="1" height="12" fill="#8c8c8c"/><rect x="282.24" y="10.3" width="1" height="1.7" fill="#7a7a7a"/><rect x="287.08" y="9" width="1" height="3" fill="#8c8c8c"/><rect x="291.93" y="10.3" width="1" height="1.7" fill="#7a7a7a"/><rect x="296.77" y="9" width="1" height="3" fill="#8c8c8c"/><rect x="301.61" y="10.3" width="1" height="1.7" fill="#7a7a7a"/><rect x="306.45" y="7.5" width="1" height="4.5" fill="#8c8c8c"/><rect x="311.29" y="10.3" width="1" height="1.7" fill="#7a7a7a"/><rect x="316.13" y="9" width="1" height="3" fill="#8c8c8c"/><rect x="320.98" y="10.3" width="1" height="1.7" fill="#7a7a7a"/><rect x="325.82" y="9" width="1" height="3" fill="#8c8c8c"/><rect x="330.66" y="10.3" width="1" height="1.7" fill="#7a7a7a"/><rect x="335.50" y="0" width="1" height="12" fill="#8c8c8c"/><rect x="340.34" y="10.3" width="1" height="1.7" fill="#7a7a7a"/><rect x="345.18" y="9" width="1" height="3" fill="#8c8c8c"/><rect x="350.02" y="10.3" width="1" height="1.7" fill="#7a7a7a"/><rect x="354.87" y="9" width="1" height="3" fill="#8c8c8c"/><rect x="359.71" y="10.3" width="1" height="1.7" fill="#7a7a7a"/><rect x="364.55" y="7.5" width="1" height="4.5" fill="#8c8c8c"/><rect x="369.39" y="10.3" width="1" height="1.7" fill="#7a7a7a"/><rect x="374.23" y="9" width="1" height="3" fill="#8c8c8c"/><rect x="379.08" y="10.3" width="1" height="1.7" fill="#7a7a7a"/><rect x="383.92" y="9" width="1" height="3" fill="#8c8c8c"/><rect x="388.76" y="10.3" width="1" height="1.7" fill="#7a7a7a"/><rect x="393.60" y="0" width="1" height="12" fill="#8c8c8c"/><rect x="398.44" y="10.3" width="1" height="1.7" fill="#7a7a7a"/><rect x="403.28" y="9" width="1" height="3" fill="#8c8c8c"/><rect x="408.12" y="10.3" width="1" height="1.7" fill="#7a7a7a"/><rect x="412.97" y="9" width="1" height="3" fill="#8c8c8c"/><rect x="417.81" y="10.3" width="1" height="1.7" fill="#7a7a7a"/><rect x="422.65" y="7.5" width="1" height="4.5" fill="#8c8c8c"/><rect x="427.49" y="10.3" width="1" height="1.7" fill="#7a7a7a"/><rect x="432.33" y="9" width="1" height="3" fill="#8c8c8c"/><rect x="437.18" y="10.3" width="1" height="1.7" fill="#7a7a7a"/><rect x="442.02" y="9" width="1" height="3" fill="#8c8c8c"/><rect x="446.86" y="10.3" width="1" height="1.7" fill="#7a7a7a"/><rect x="451.70" y="0" width="1" height="12" fill="#8c8c8c"/><rect x="456.54" y="10.3" width="1" height="1.7" fill="#7a7a7a"/><rect x="461.38" y="9" width="1" height="3" fill="#8c8c8c"/><rect x="466.23" y="10.3" width="1" height="1.7" fill="#7a7a7a"/><rect x="471.07" y="9" width="1" height="3" fill="#8c8c8c"/><rect x="475.91" y="10.3" width="1" height="1.7" fill="#7a7a7a"/><rect x="480.75" y="7.5" width="1" height="4.5" fill="#8c8c8c"/><rect x="485.59" y="10.3" width="1" height="1.7" fill="#7a7a7a"/><rect x="490.43" y="9" width="1" height="3" fill="#8c8c8c"/><rect x="495.28" y="10.3" width="1" height="1.7" fill="#7a7a7a"/><rect x="500.12" y="9" width="1" height="3" fill="#8c8c8c"/><rect x="504.96" y="10.3" width="1" height="1.7" fill="#7a7a7a"/><rect x="509.80" y="0" width="1" height="12" fill="#8c8c8c"/><rect x="514.64" y="10.3" width="1" height="1.7" fill="#7a7a7a"/><rect x="519.48" y="9" width="1" height="3" fill="#8c8c8c"/><rect x="524.33" y="10.3" width="1" height="1.7" fill="#7a7a7a"/><rect x="529.17" y="9" width="1" height="3" fill="#8c8c8c"/><rect x="534.01" y="10.3" width="1" height="1.7" fill="#7a7a7a"/><rect x="538.85" y="7.5" width="1" height="4.5" fill="#8c8c8c"/><rect x="543.69" y="10.3" width="1" height="1.7" fill="#7a7a7a"/><rect x="548.53" y="9" width="1" height="3" fill="#8c8c8c"/><rect x="553.38" y="10.3" width="1" height="1.7" fill="#7a7a7a"/><rect x="558.22" y="9" width="1" height="3" fill="#8c8c8c"/><rect x="563.06" y="10.3" width="1" height="1.7" fill="#7a7a7a"/><rect x="567.90" y="0" width="1" height="12" fill="#8c8c8c"/><rect x="572.74" y="10.3" width="1" height="1.7" fill="#7a7a7a"/><rect x="577.58" y="9" width="1" height="3" fill="#8c8c8c"/><rect x="582.42" y="10.3" width="1" height="1.7" fill="#7a7a7a"/><rect x="587.27" y="9" width="1" height="3" fill="#8c8c8c"/><rect x="592.11" y="10.3" width="1" height="1.7" fill="#7a7a7a"/><rect x="596.95" y="7.5" width="1" height="4.5" fill="#8c8c8c"/><rect x="601.79" y="10.3" width="1" height="1.7" fill="#7a7a7a"/><rect x="606.63" y="9" width="1" height="3" fill="#8c8c8c"/><rect x="611.48" y="10.3" width="1" height="1.7" fill="#7a7a7a"/><rect x="616.32" y="9" width="1" height="3" fill="#8c8c8c"/><rect x="621.16" y="10.3" width="1" height="1.7" fill="#7a7a7a"/><rect x="626.00" y="0" width="1" height="12" fill="#8c8c8c"/><rect x="630.84" y="10.3" width="1" height="1.7" fill="#7a7a7a"/><rect x="635.68" y="9" width="1" height="3" fill="#8c8c8c"/><rect x="640.53" y="10.3" width="1" height="1.7" fill="#7a7a7a"/><rect x="645.37" y="9" width="1" height="3" fill="#8c8c8c"/><rect x="650.21" y="10.3" width="1" height="1.7" fill="#7a7a7a"/><rect x="655.05" y="7.5" width="1" height="4.5" fill="#8c8c8c"/><rect x="659.89" y="10.3" width="1" height="1.7" fill="#7a7a7a"/><rect x="664.73" y="9" width="1" height="3" fill="#8c8c8c"/><rect x="669.58" y="10.3" width="1" height="1.7" fill="#7a7a7a"/><rect x="674.42" y="9" width="1" height="3" fill="#8c8c8c"/><rect x="679.26" y="10.3" width="1" height="1.7" fill="#7a7a7a"/><rect x="684.10" y="0" width="1" height="12" fill="#8c8c8c"/><rect x="688.94" y="10.3" width="1" height="1.7" fill="#7a7a7a"/><rect x="693.78" y="9" width="1" height="3" fill="#8c8c8c"/><rect x="698.62" y="10.3" width="1" height="1.7" fill="#7a7a7a"/><rect x="703.47" y="9" width="1" height="3" fill="#8c8c8c"/><rect x="708.31" y="10.3" width="1" height="1.7" fill="#7a7a7a"/><rect x="713.15" y="7.5" width="1" height="4.5" fill="#8c8c8c"/><rect x="717.99" y="10.3" width="1" height="1.7" fill="#7a7a7a"/><rect x="722.83" y="9" width="1" height="3" fill="#8c8c8c"/><rect x="727.67" y="10.3" width="1" height="1.7" fill="#7a7a7a"/><rect x="732.52" y="9" width="1" height="3" fill="#8c8c8c"/><rect x="737.36" y="10.3" width="1" height="1.7" fill="#7a7a7a"/><rect x="742.20" y="0" width="1" height="12" fill="#8c8c8c"/><rect x="747.04" y="10.3" width="1" height="1.7" fill="#7a7a7a"/><rect x="751.88" y="9" width="1" height="3" fill="#8c8c8c"/><rect x="756.73" y="10.3" width="1" height="1.7" fill="#7a7a7a"/><rect x="761.57" y="9" width="1" height="3" fill="#8c8c8c"/><rect x="766.41" y="10.3" width="1" height="1.7" fill="#7a7a7a"/><rect x="771.25" y="7.5" width="1" height="4.5" fill="#8c8c8c"/><rect x="776.09" y="10.3" width="1" height="1.7" fill="#7a7a7a"/><rect x="780.93" y="9" width="1" height="3" fill="#8c8c8c"/><rect x="785.78" y="10.3" width="1" height="1.7" fill="#7a7a7a"/><rect x="790.62" y="9" width="1" height="3" fill="#8c8c8c"/><rect x="795.46" y="10.3" width="1" height="1.7" fill="#7a7a7a"/><rect x="800.30" y="0" width="1" height="12" fill="#8c8c8c"/><rect x="805.14" y="10.3" width="1" height="1.7" fill="#7a7a7a"/><rect x="809.98" y="9" width="1" height="3" fill="#8c8c8c"/><rect x="814.83" y="10.3" width="1" height="1.7" fill="#7a7a7a"/><rect x="819.67" y="9" width="1" height="3" fill="#8c8c8c"/><rect x="824.51" y="10.3" width="1" height="1.7" fill="#7a7a7a"/><rect x="829.35" y="7.5" width="1" height="4.5" fill="#8c8c8c"/><rect x="834.19" y="10.3" width="1" height="1.7" fill="#7a7a7a"/><rect x="839.03" y="9" width="1" height="3" fill="#8c8c8c"/><rect x="843.88" y="10.3" width="1" height="1.7" fill="#7a7a7a"/><rect x="848.72" y="9" width="1" height="3" fill="#8c8c8c"/><rect x="853.56" y="10.3" width="1" height="1.7" fill="#7a7a7a"/><rect x="858.40" y="0" width="1" height="12" fill="#8c8c8c"/><rect x="863.24" y="10.3" width="1" height="1.7" fill="#7a7a7a"/><rect x="868.08" y="9" width="1" height="3" fill="#8c8c8c"/><rect x="872.92" y="10.3" width="1" height="1.7" fill="#7a7a7a"/><rect x="877.77" y="9" width="1" height="3" fill="#8c8c8c"/><text x="47.10" y="8.3" font-size="9.6" font-family="Liberation Sans" fill="#e4e4e4" textLength="8.90" lengthAdjust="spacingAndGlyphs">18</text><text x="105.20" y="8.3" font-size="9.6" font-family="Liberation Sans" fill="#e4e4e4" textLength="8.90" lengthAdjust="spacingAndGlyphs">12</text><text x="163.30" y="8.3" font-size="9.6" font-family="Liberation Sans" fill="#e4e4e4" textLength="4.45" lengthAdjust="spacingAndGlyphs">6</text><text x="221.40" y="8.3" font-size="9.6" font-family="Liberation Sans" fill="#e4e4e4" textLength="4.45" lengthAdjust="spacingAndGlyphs">0</text><text x="279.50" y="8.3" font-size="9.6" font-family="Liberation Sans" fill="#e4e4e4" textLength="4.45" lengthAdjust="spacingAndGlyphs">6</text><text x="337.60" y="8.3" font-size="9.6" font-family="Liberation Sans" fill="#e4e4e4" textLength="8.90" lengthAdjust="spacingAndGlyphs">12</text><text x="395.70" y="8.3" font-size="9.6" font-family="Liberation Sans" fill="#e4e4e4" textLength="8.90" lengthAdjust="spacingAndGlyphs">18</text><text x="453.80" y="8.3" font-size="9.6" font-family="Liberation Sans" fill="#e4e4e4" textLength="8.90" lengthAdjust="spacingAndGlyphs">24</text><text x="511.90" y="8.3" font-size="9.6" font-family="Liberation Sans" fill="#e4e4e4" textLength="8.90" lengthAdjust="spacingAndGlyphs">30</text><text x="570.00" y="8.3" font-size="9.6" font-family="Liberation Sans" fill="#e4e4e4" textLength="8.90" lengthAdjust="spacingAndGlyphs">36</text><text x="628.10" y="8.3" font-size="9.6" font-family="Liberation Sans" fill="#e4e4e4" textLength="8.90" lengthAdjust="spacingAndGlyphs">42</text><text x="686.20" y="8.3" font-size="9.6" font-family="Liberation Sans" fill="#e4e4e4" textLength="8.90" lengthAdjust="spacingAndGlyphs">48</text><text x="744.30" y="8.3" font-size="9.6" font-family="Liberation Sans" fill="#e4e4e4" textLength="8.90" lengthAdjust="spacingAndGlyphs">54</text><text x="802.40" y="8.3" font-size="9.6" font-family="Liberation Sans" fill="#e4e4e4" textLength="8.90" lengthAdjust="spacingAndGlyphs">60</text><text x="860.50" y="8.3" font-size="9.6" font-family="Liberation Sans" fill="#e4e4e4" textLength="8.90" lengthAdjust="spacingAndGlyphs">66</text></svg>
<div style="left:33px;top:97px;width:12px;height:12px;background:#1e1e1e"></div>
<svg style="left:33px;top:97px" width="12" height="12"><path d="M3.5 0V12M0 4.5H12" stroke="#9a9a9a" stroke-width="1" stroke-dasharray="1 1"/></svg>
<svg style="left:33px;top:109px;overflow:hidden" width="12" height="656"><rect x="9" y="1.81" width="3" height="1" fill="#8c8c8c"/><rect x="10.3" y="6.66" width="1.7" height="1" fill="#7a7a7a"/><rect x="0" y="11.50" width="12" height="1" fill="#8c8c8c"/><rect x="10.3" y="16.34" width="1.7" height="1" fill="#7a7a7a"/><rect x="9" y="21.19" width="3" height="1" fill="#8c8c8c"/><rect x="10.3" y="26.03" width="1.7" height="1" fill="#7a7a7a"/><rect x="9" y="30.88" width="3" height="1" fill="#8c8c8c"/><rect x="10.3" y="35.72" width="1.7" height="1" fill="#7a7a7a"/><rect x="7.5" y="40.56" width="4.5" height="1" fill="#8c8c8c"/><rect x="10.3" y="45.41" width="1.7" height="1" fill="#7a7a7a"/><rect x="9" y="50.25" width="3" height="1" fill="#8c8c8c"/><rect x="10.3" y="55.10" width="1.7" height="1" fill="#7a7a7a"/><rect x="9" y="59.94" width="3" height="1" fill="#8c8c8c"/><rect x="10.3" y="64.79" width="1.7" height="1" fill="#7a7a7a"/><rect x="0" y="69.63" width="12" height="1" fill="#8c8c8c"/><rect x="10.3" y="74.47" width="1.7" height="1" fill="#7a7a7a"/><rect x="9" y="79.32" width="3" height="1" fill="#8c8c8c"/><rect x="10.3" y="84.16" width="1.7" height="1" fill="#7a7a7a"/><rect x="9" y="89.01" width="3" height="1" fill="#8c8c8c"/><rect x="10.3" y="93.85" width="1.7" height="1" fill="#7a7a7a"/><rect x="7.5" y="98.69" width="4.5" height="1" fill="#8c8c8c"/><rect x="10.3" y="103.54" width="1.7" height="1" fill="#7a7a7a"/><rect x="9" y="108.38" width="3" height="1" fill="#8c8c8c"/><rect x="10.3" y="113.23" width="1.7" height="1" fill="#7a7a7a"/><rect x="9" y="118.07" width="3" height="1" fill="#8c8c8c"/><rect x="10.3" y="122.92" width="1.7" height="1" fill="#7a7a7a"/><rect x="0" y="127.76" width="12" height="1" fill="#8c8c8c"/><rect x="10.3" y="132.60" width="1.7" height="1" fill="#7a7a7a"/><rect x="9" y="137.45" width="3" height="1" fill="#8c8c8c"/><rect x="10.3" y="142.29" width="1.7" height="1" fill="#7a7a7a"/><rect x="9" y="147.14" width="3" height="1" fill="#8c8c8c"/><rect x="10.3" y="151.98" width="1.7" height="1" fill="#7a7a7a"/><rect x="7.5" y="156.83" width="4.5" height="1" fill="#8c8c8c"/><rect x="10.3" y="161.67" width="1.7" height="1" fill="#7a7a7a"/><rect x="9" y="166.51" width="3" height="1" fill="#8c8c8c"/><rect x="10.3" y="171.36" width="1.7" height="1" fill="#7a7a7a"/><rect x="9" y="176.20" width="3" height="1" fill="#8c8c8c"/><rect x="10.3" y="181.05" width="1.7" height="1" fill="#7a7a7a"/><rect x="0" y="185.89" width="12" height="1" fill="#8c8c8c"/><rect x="10.3" y="190.73" width="1.7" height="1" fill="#7a7a7a"/><rect x="9" y="195.58" width="3" height="1" fill="#8c8c8c"/><rect x="10.3" y="200.42" width="1.7" height="1" fill="#7a7a7a"/><rect x="9" y="205.27" width="3" height="1" fill="#8c8c8c"/><rect x="10.3" y="210.11" width="1.7" height="1" fill="#7a7a7a"/><rect x="7.5" y="214.96" width="4.5" height="1" fill="#8c8c8c"/><rect x="10.3" y="219.80" width="1.7" height="1" fill="#7a7a7a"/><rect x="9" y="224.64" width="3" height="1" fill="#8c8c8c"/><rect x="10.3" y="229.49" width="1.7" height="1" fill="#7a7a7a"/><rect x="9" y="234.33" width="3" height="1" fill="#8c8c8c"/><rect x="10.3" y="239.18" width="1.7" height="1" fill="#7a7a7a"/><rect x="0" y="244.02" width="12" height="1" fill="#8c8c8c"/><rect x="10.3" y="248.86" width="1.7" height="1" fill="#7a7a7a"/><rect x="9" y="253.71" width="3" height="1" fill="#8c8c8c"/><rect x="10.3" y="258.55" width="1.7" height="1" fill="#7a7a7a"/><rect x="9" y="263.40" width="3" height="1" fill="#8c8c8c"/><rect x="10.3" y="268.24" width="1.7" height="1" fill="#7a7a7a"/><rect x="7.5" y="273.09" width="4.5" height="1" fill="#8c8c8c"/><rect x="10.3" y="277.93" width="1.7" height="1" fill="#7a7a7a"/><rect x="9" y="282.77" width="3" height="1" fill="#8c8c8c"/><rect x="10.3" y="287.62" width="1.7" height="1" fill="#7a7a7a"/><rect x="9" y="292.46" width="3" height="1" fill="#8c8c8c"/><rect x="10.3" y="297.31" width="1.7" height="1" fill="#7a7a7a"/><rect x="0" y="302.15" width="12" height="1" fill="#8c8c8c"/><rect x="10.3" y="306.99" width="1.7" height="1" fill="#7a7a7a"/><rect x="9" y="311.84" width="3" height="1" fill="#8c8c8c"/><rect x="10.3" y="316.68" width="1.7" height="1" fill="#7a7a7a"/><rect x="9" y="321.53" width="3" height="1" fill="#8c8c8c"/><rect x="10.3" y="326.37" width="1.7" height="1" fill="#7a7a7a"/><rect x="7.5" y="331.22" width="4.5" height="1" fill="#8c8c8c"/><rect x="10.3" y="336.06" width="1.7" height="1" fill="#7a7a7a"/><rect x="9" y="340.90" width="3" height="1" fill="#8c8c8c"/><rect x="10.3" y="345.75" width="1.7" height="1" fill="#7a7a7a"/><rect x="9" y="350.59" width="3" height="1" fill="#8c8c8c"/><rect x="10.3" y="355.44" width="1.7" height="1" fill="#7a7a7a"/><rect x="0" y="360.28" width="12" height="1" fill="#8c8c8c"/><rect x="10.3" y="365.12" width="1.7" height="1" fill="#7a7a7a"/><rect x="9" y="369.97" width="3" height="1" fill="#8c8c8c"/><rect x="10.3" y="374.81" width="1.7" height="1" fill="#7a7a7a"/><rect x="9" y="379.66" width="3" height="1" fill="#8c8c8c"/><rect x="10.3" y="384.50" width="1.7" height="1" fill="#7a7a7a"/><rect x="7.5" y="389.35" width="4.5" height="1" fill="#8c8c8c"/><rect x="10.3" y="394.19" width="1.7" height="1" fill="#7a7a7a"/><rect x="9" y="399.03" width="3" height="1" fill="#8c8c8c"/><rect x="10.3" y="403.88" width="1.7" height="1" fill="#7a7a7a"/><rect x="9" y="408.72" width="3" height="1" fill="#8c8c8c"/><rect x="10.3" y="413.57" width="1.7" height="1" fill="#7a7a7a"/><rect x="0" y="418.41" width="12" height="1" fill="#8c8c8c"/><rect x="10.3" y="423.25" width="1.7" height="1" fill="#7a7a7a"/><rect x="9" y="428.10" width="3" height="1" fill="#8c8c8c"/><rect x="10.3" y="432.94" width="1.7" height="1" fill="#7a7a7a"/><rect x="9" y="437.79" width="3" height="1" fill="#8c8c8c"/><rect x="10.3" y="442.63" width="1.7" height="1" fill="#7a7a7a"/><rect x="7.5" y="447.48" width="4.5" height="1" fill="#8c8c8c"/><rect x="10.3" y="452.32" width="1.7" height="1" fill="#7a7a7a"/><rect x="9" y="457.16" width="3" height="1" fill="#8c8c8c"/><rect x="10.3" y="462.01" width="1.7" height="1" fill="#7a7a7a"/><rect x="9" y="466.85" width="3" height="1" fill="#8c8c8c"/><rect x="10.3" y="471.70" width="1.7" height="1" fill="#7a7a7a"/><rect x="0" y="476.54" width="12" height="1" fill="#8c8c8c"/><rect x="10.3" y="481.38" width="1.7" height="1" fill="#7a7a7a"/><rect x="9" y="486.23" width="3" height="1" fill="#8c8c8c"/><rect x="10.3" y="491.07" width="1.7" height="1" fill="#7a7a7a"/><rect x="9" y="495.92" width="3" height="1" fill="#8c8c8c"/><rect x="10.3" y="500.76" width="1.7" height="1" fill="#7a7a7a"/><rect x="7.5" y="505.61" width="4.5" height="1" fill="#8c8c8c"/><rect x="10.3" y="510.45" width="1.7" height="1" fill="#7a7a7a"/><rect x="9" y="515.29" width="3" height="1" fill="#8c8c8c"/><rect x="10.3" y="520.14" width="1.7" height="1" fill="#7a7a7a"/><rect x="9" y="524.98" width="3" height="1" fill="#8c8c8c"/><rect x="10.3" y="529.83" width="1.7" height="1" fill="#7a7a7a"/><rect x="0" y="534.67" width="12" height="1" fill="#8c8c8c"/><rect x="10.3" y="539.51" width="1.7" height="1" fill="#7a7a7a"/><rect x="9" y="544.36" width="3" height="1" fill="#8c8c8c"/><rect x="10.3" y="549.20" width="1.7" height="1" fill="#7a7a7a"/><rect x="9" y="554.05" width="3" height="1" fill="#8c8c8c"/><rect x="10.3" y="558.89" width="1.7" height="1" fill="#7a7a7a"/><rect x="7.5" y="563.74" width="4.5" height="1" fill="#8c8c8c"/><rect x="10.3" y="568.58" width="1.7" height="1" fill="#7a7a7a"/><rect x="9" y="573.42" width="3" height="1" fill="#8c8c8c"/><rect x="10.3" y="578.27" width="1.7" height="1" fill="#7a7a7a"/><rect x="9" y="583.11" width="3" height="1" fill="#8c8c8c"/><rect x="10.3" y="587.96" width="1.7" height="1" fill="#7a7a7a"/><rect x="0" y="592.80" width="12" height="1" fill="#8c8c8c"/><rect x="10.3" y="597.64" width="1.7" height="1" fill="#7a7a7a"/><rect x="9" y="602.49" width="3" height="1" fill="#8c8c8c"/><rect x="10.3" y="607.33" width="1.7" height="1" fill="#7a7a7a"/><rect x="9" y="612.18" width="3" height="1" fill="#8c8c8c"/><rect x="10.3" y="617.02" width="1.7" height="1" fill="#7a7a7a"/><rect x="7.5" y="621.87" width="4.5" height="1" fill="#8c8c8c"/><rect x="10.3" y="626.71" width="1.7" height="1" fill="#7a7a7a"/><rect x="9" y="631.55" width="3" height="1" fill="#8c8c8c"/><rect x="10.3" y="636.40" width="1.7" height="1" fill="#7a7a7a"/><rect x="9" y="641.24" width="3" height="1" fill="#8c8c8c"/><rect x="10.3" y="646.09" width="1.7" height="1" fill="#7a7a7a"/><rect x="0" y="650.93" width="12" height="1" fill="#8c8c8c"/><text x="1.7" y="20.90" font-size="9.6" font-family="Liberation Sans" fill="#e4e4e4" textLength="4.5" lengthAdjust="spacingAndGlyphs">0</text><text x="1.7" y="79.03" font-size="9.6" font-family="Liberation Sans" fill="#e4e4e4" textLength="4.5" lengthAdjust="spacingAndGlyphs">6</text><text x="1.7" y="137.16" font-size="9.6" font-family="Liberation Sans" fill="#e4e4e4" textLength="4.5" lengthAdjust="spacingAndGlyphs">1</text><text x="1.7" y="144.26" font-size="9.6" font-family="Liberation Sans" fill="#e4e4e4" textLength="4.5" lengthAdjust="spacingAndGlyphs">2</text><text x="1.7" y="195.29" font-size="9.6" font-family="Liberation Sans" fill="#e4e4e4" textLength="4.5" lengthAdjust="spacingAndGlyphs">1</text><text x="1.7" y="202.39" font-size="9.6" font-family="Liberation Sans" fill="#e4e4e4" textLength="4.5" lengthAdjust="spacingAndGlyphs">8</text><text x="1.7" y="253.42" font-size="9.6" font-family="Liberation Sans" fill="#e4e4e4" textLength="4.5" lengthAdjust="spacingAndGlyphs">2</text><text x="1.7" y="260.52" font-size="9.6" font-family="Liberation Sans" fill="#e4e4e4" textLength="4.5" lengthAdjust="spacingAndGlyphs">4</text><text x="1.7" y="311.55" font-size="9.6" font-family="Liberation Sans" fill="#e4e4e4" textLength="4.5" lengthAdjust="spacingAndGlyphs">3</text><text x="1.7" y="318.65" font-size="9.6" font-family="Liberation Sans" fill="#e4e4e4" textLength="4.5" lengthAdjust="spacingAndGlyphs">0</text><text x="1.7" y="369.68" font-size="9.6" font-family="Liberation Sans" fill="#e4e4e4" textLength="4.5" lengthAdjust="spacingAndGlyphs">3</text><text x="1.7" y="376.78" font-size="9.6" font-family="Liberation Sans" fill="#e4e4e4" textLength="4.5" lengthAdjust="spacingAndGlyphs">6</text><text x="1.7" y="427.81" font-size="9.6" font-family="Liberation Sans" fill="#e4e4e4" textLength="4.5" lengthAdjust="spacingAndGlyphs">4</text><text x="1.7" y="434.91" font-size="9.6" font-family="Liberation Sans" fill="#e4e4e4" textLength="4.5" lengthAdjust="spacingAndGlyphs">2</text><text x="1.7" y="485.94" font-size="9.6" font-family="Liberation Sans" fill="#e4e4e4" textLength="4.5" lengthAdjust="spacingAndGlyphs">4</text><text x="1.7" y="493.04" font-size="9.6" font-family="Liberation Sans" fill="#e4e4e4" textLength="4.5" lengthAdjust="spacingAndGlyphs">8</text><text x="1.7" y="544.07" font-size="9.6" font-family="Liberation Sans" fill="#e4e4e4" textLength="4.5" lengthAdjust="spacingAndGlyphs">5</text><text x="1.7" y="551.17" font-size="9.6" font-family="Liberation Sans" fill="#e4e4e4" textLength="4.5" lengthAdjust="spacingAndGlyphs">4</text><text x="1.7" y="602.20" font-size="9.6" font-family="Liberation Sans" fill="#e4e4e4" textLength="4.5" lengthAdjust="spacingAndGlyphs">6</text><text x="1.7" y="609.30" font-size="9.6" font-family="Liberation Sans" fill="#e4e4e4" textLength="4.5" lengthAdjust="spacingAndGlyphs">0</text><text x="1.7" y="660.33" font-size="9.6" font-family="Liberation Sans" fill="#e4e4e4" textLength="4.5" lengthAdjust="spacingAndGlyphs">6</text><text x="1.7" y="667.43" font-size="9.6" font-family="Liberation Sans" fill="#e4e4e4" textLength="4.5" lengthAdjust="spacingAndGlyphs">6</text></svg>
<svg style="left:4.2px;top:76.8px" width="6.5" height="4.5" viewBox="0 0 6.5 4.5"><path d="M0.5 0.4L2.4 2.2L0.5 4M3.6 0.4L5.5 2.2L3.6 4" fill="none" stroke="#a8a8a8" stroke-width="1.1"/></svg>
<svg style="left:8px;top:86.6px" width="15" height="2.5" viewBox="0 0 15 2.5"><rect x="0.0" y="0" width="1.3" height="2" fill="#3c3c3c"/><rect x="2.2" y="0" width="1.3" height="2" fill="#3c3c3c"/><rect x="4.4" y="0" width="1.3" height="2" fill="#3c3c3c"/><rect x="6.6000000000000005" y="0" width="1.3" height="2" fill="#3c3c3c"/><rect x="8.8" y="0" width="1.3" height="2" fill="#3c3c3c"/><rect x="11.0" y="0" width="1.3" height="2" fill="#3c3c3c"/><rect x="13.200000000000001" y="0" width="1.3" height="2" fill="#3c3c3c"/></svg>
<div style="left:5.1px;top:95.8px;width:21.2px;height:16.7px;background:#333;border-radius:3px"></div>
<svg style="left:10px;top:97px" width="14" height="15" viewBox="0 0 14 15"><path d="M2 1.5L11.2 10.2H6.5L2.3 14Z" fill="none" stroke="#cdcdcd" stroke-width="1.1" stroke-linejoin="miter"/></svg>
<svg style="left:10px;top:115.5px" width="13" height="15" viewBox="0 0 13 15"><path d="M1 1L11.2 10.2H6.2L1.6 14.3Z" fill="#cdcdcd"/></svg>
<svg style="left:10px;top:136px" width="14" height="12" viewBox="0 0 14 12"><path d="M1.4 0.6H5.5L8 3.1V6M7 10.6H1.4V0.6" fill="none" stroke="#cdcdcd" stroke-width="1"/><path d="M5.5 0.6V3.1H8" fill="none" stroke="#cdcdcd" stroke-width="0.9"/><path d="M8 5L12.5 8.6L8 11.2Z" fill="#cdcdcd"/></svg>
<svg style="left:8px;top:154.5px" width="16" height="12" viewBox="0 0 16 12"><rect x="0.4" y="0.4" width="1.8" height="11" fill="#cdcdcd"/><rect x="13" y="0.4" width="1.8" height="11" fill="#cdcdcd"/><path d="M4 6H11" stroke="#cdcdcd" stroke-width="1.1"/><path d="M3 6L5.5 3.8V8.2Z M12 6L9.5 3.8V8.2Z" fill="#cdcdcd"/></svg>
<svg style="left:10px;top:173px" width="12" height="13" viewBox="0 0 12 13"><path d="M0.7 5.5V12H11.3V5.5" fill="none" stroke="#cdcdcd" stroke-width="1.3"/><path d="M2.5 7.5h1.5M5 7.5h1.5M7.5 7.5h1.5M2.5 9.8h1.5M5 9.8h1.5M7.5 9.8h1.5" stroke="#cdcdcd" stroke-width="1"/><path d="M1.5 0.5L5.5 4.5" stroke="#cdcdcd" stroke-width="1.2"/><path d="M6.5 5.5V2.2L3.2 5.5Z" fill="#cdcdcd"/></svg>
<svg style="left:22.3px;top:183.5px" width="3" height="3"><path d="M2.6 0V2.6H0Z" fill="#cdcdcd"/></svg>
<div style="left:3px;top:189.5px;width:26px;height:1px;background:#4a4a4a"></div>
<svg style="left:9.5px;top:194.5px" width="13" height="13" viewBox="0 0 13 13"><path d="M1 3.5V1H12V3.5M6.5 1V11.5M4 11.5H9" fill="none" stroke="#cdcdcd" stroke-width="1.6"/></svg>
<svg style="left:22.5px;top:205px" width="3" height="3"><path d="M2.6 0V2.6H0Z" fill="#cdcdcd"/></svg>
<svg style="left:9.5px;top:213.5px" width="13" height="12" viewBox="0 0 13 12"><path d="M0.8 11.2L11.8 0.8" stroke="#cdcdcd" stroke-width="1.3"/></svg>
<svg style="left:9px;top:232.5px" width="13" height="13" viewBox="0 0 13 13"><path d="M1 12L2.5 6.5L7 3L10 6L6.5 10.5Z" fill="#cdcdcd"/><path d="M7.6 2.4L9.4 0.6L12.4 3.6L10.6 5.4Z" fill="#cdcdcd"/><path d="M1 12L5 8" stroke="#535353" stroke-width="0.9"/></svg>
<svg style="left:22.5px;top:242px" width="3" height="3"><path d="M2.6 0V2.6H0Z" fill="#cdcdcd"/></svg>
<svg style="left:9px;top:250.5px" width="13" height="13" viewBox="0 0 13 13"><path d="M1 12.2L1.8 9.2L9 2L11 4L3.8 11.2Z" fill="#cdcdcd"/><path d="M9.6 1.4L10.6 0.4L12.6 2.4L11.6 3.4Z" fill="#cdcdcd"/></svg>
<svg style="left:22.5px;top:261px" width="3" height="3"><path d="M2.6 0V2.6H0Z" fill="#cdcdcd"/></svg>
<svg style="left:9px;top:270px" width="13" height="12" viewBox="0 0 13 12"><rect x="0.7" y="0.7" width="11.6" height="10.6" fill="none" stroke="#cdcdcd" stroke-width="1.3"/><path d="M1 1L12 11M12 1L1 11" stroke="#cdcdcd" stroke-width="1"/></svg>
<svg style="left:22.5px;top:280px" width="3" height="3"><path d="M2.6 0V2.6H0Z" fill="#cdcdcd"/></svg>
<svg style="left:8px;top:289px" width="16" height="12" viewBox="0 0 16 12"><ellipse cx="7.6" cy="5.8" rx="7" ry="5.2" fill="#6b6b6b" stroke="#cdcdcd" stroke-width="1.2"/></svg>
<svg style="left:22.5px;top:299.5px" width="3" height="3"><path d="M2.6 0V2.6H0Z" fill="#cdcdcd"/></svg>
<div style="left:3px;top:305px;width:26px;height:1px;background:#4a4a4a"></div>
<svg style="left:8.5px;top:309px" width="15" height="13" viewBox="0 0 15 13"><circle cx="11.6" cy="2.6" r="2" fill="none" stroke="#cdcdcd" stroke-width="1.2"/><circle cx="11.6" cy="10.2" r="2" fill="none" stroke="#cdcdcd" stroke-width="1.2"/><path d="M0.5 3L9.8 8.9M0.5 9.8L9.8 3.8" stroke="#cdcdcd" stroke-width="1.5"/></svg>
<svg style="left:8px;top:328px" width="18" height="14" viewBox="0 0 18 14"><path d="M4.5 1.8H14.3V11.5H4.5" fill="none" stroke="#cdcdcd" stroke-width="1" stroke-dasharray="1.5 1"/><path d="M0.5 1L7.5 6.5L3.5 7L0.8 10.8Z" fill="#cdcdcd"/><rect x="3.5" y="11" width="1.5" height="1.5" fill="#cdcdcd"/><rect x="13.5" y="11" width="1.5" height="1.5" fill="#cdcdcd"/><rect x="13.5" y="1" width="1.5" height="1.5" fill="#cdcdcd"/><path d="M15 12L17 14" stroke="#cdcdcd" stroke-width="0.8"/></svg>
<svg style="left:9px;top:347.5px" width="13.5" height="12" viewBox="0 0 13.5 12"><defs><linearGradient id="g1" x1="0" x2="1"><stop offset="0" stop-color="#d8d8d8"/><stop offset="1" stop-color="#4e4e4e"/></linearGradient></defs><rect x="0.6" y="0.6" width="12" height="10.6" fill="url(#g1)" stroke="#d0d0d0" stroke-width="1.1"/></svg>
<svg style="left:9px;top:366px" width="13.5" height="12" viewBox="0 0 13.5 12"><defs><linearGradient id="g2" x1="0" y1="0" x2="0" y2="1"><stop offset="0" stop-color="#6a6a6a"/><stop offset="1" stop-color="#d8d8d8"/></linearGradient></defs><rect x="0.6" y="0.6" width="12" height="10.6" fill="url(#g2)" stroke="#d0d0d0" stroke-width="1.1"/><path d="M2 4Q4 2 6.5 4Q9 2 11 4" fill="none" stroke="#8a8a8a" stroke-width="1"/></svg>
<div style="left:3px;top:382px;width:26px;height:1px;background:#4a4a4a"></div>
<svg style="left:9.8px;top:387.8px" width="12" height="12" viewBox="0 0 12 12"><path d="M0 0H11.3V7.8L7.8 11.3H0Z" fill="#cdcdcd"/><path d="M2.5 2.5H8.8M2.5 4.8H8.8M2.5 7H5" stroke="#6a6a6a" stroke-width="0.9"/><path d="M8.2 11L11 8.2H8.2Z" fill="#535353"/></svg>
<svg style="left:8.5px;top:405.5px" width="17" height="14" viewBox="0 0 17 14"><path d="M1.5 12.8L9 5.2" stroke="#cdcdcd" stroke-width="3.2" stroke-linecap="round"/><path d="M1.5 12.8L9 5.2" stroke="#535353" stroke-width="1.2" stroke-linecap="round"/><circle cx="11.5" cy="2.6" r="2.3" fill="#cdcdcd"/><path d="M7.5 3.5L11 7" stroke="#cdcdcd" stroke-width="1.6"/><path d="M8 10.5H15.5V12.8H8" fill="none" stroke="#cdcdcd" stroke-width="1.1"/><path d="M15 12.2L16.5 13.5" stroke="#cdcdcd" stroke-width="1"/></svg>
<svg style="left:9px;top:424px" width="13" height="14" viewBox="0 0 13 14"><path d="M3.5 13.2L0.3 7.8Q0 6.5 1.3 6.8L3 8.5V2.2Q3 1.2 3.9 1.2Q4.8 1.2 4.8 2.2V6.5V1Q4.8 0 5.8 0Q6.8 0 6.8 1V6.5V1.5Q6.8 0.5 7.7 0.5Q8.6 0.5 8.6 1.5V7V3Q8.6 2 9.5 2Q10.4 2 10.4 3V9Q10.4 13.2 7 13.2Z" fill="#cdcdcd"/></svg>
<svg style="left:9px;top:443px" width="13" height="13" viewBox="0 0 13 13"><circle cx="5.1" cy="5" r="4.3" fill="none" stroke="#cdcdcd" stroke-width="1.2"/><path d="M8.2 8.1L12.3 12.3" stroke="#cdcdcd" stroke-width="1.6" stroke-linecap="round"/></svg>
<div style="left:3px;top:460px;width:26px;height:1px;background:#4a4a4a"></div>
<svg style="left:4px;top:463px" width="11" height="10.5" viewBox="0 0 11 10.5"><rect x="3.8" y="3.6" width="5.6" height="5.6" fill="#4a4a4a" stroke="#111" stroke-width="1.8"/><rect x="0.2" y="0.2" width="5.8" height="5.8" fill="#fff"/><path d="M0.2 6L6 0.2" stroke="#e8141c" stroke-width="1.2"/></svg>
<svg style="left:19.3px;top:466.5px" width="8.5" height="8.5" viewBox="0 0 8.5 8.5"><path d="M1.5 1.5H5.5Q6.8 1.5 6.8 3V6.5" fill="none" stroke="#cdcdcd" stroke-width="1.1"/><path d="M0 1.5L2.5 0V3Z M6.8 8.3L5.2 5.8H8.4Z" fill="#cdcdcd"/></svg>
<div style="left:12px;top:484.2px;width:15px;height:14.7px;background:#000"></div>
<div style="left:15.8px;top:488px;width:7.3px;height:7px;background:#535353"></div>
<svg style="left:4.6px;top:476.9px" width="15.6" height="15" viewBox="0 0 15.6 15"><rect width="15.6" height="15" fill="#fff"/><path d="M0 15L15.6 0" stroke="#f01010" stroke-width="1.6"/></svg>
<div style="left:5.2px;top:505.4px;width:9.8px;height:8.9px;background:#3a3a3a;border-radius:2px"></div>
<svg style="left:6.9px;top:507px" width="6.5" height="6" viewBox="0 0 6.5 6"><rect x="0.5" y="0.5" width="5.4" height="5" fill="none" stroke="#cdcdcd" stroke-width="1"/></svg>
<svg style="left:18.9px;top:507px" width="7" height="6.5" viewBox="0 0 7 6.5"><path d="M0.5 1.8V0.6H6.4V1.8M3.45 0.6V6M2 6H4.9" fill="none" stroke="#cdcdcd" stroke-width="1.1"/></svg>
<div style="left:5.1px;top:520.5px;width:21.2px;height:16.4px;background:#333;border-radius:3px"></div>
<svg style="left:9.6px;top:523.4px" width="12.3" height="11" viewBox="0 0 12.3 11"><rect width="12.3" height="11" fill="#fff"/><path d="M0.3 10.7L12 0.3" stroke="#f01010" stroke-width="1.6"/></svg>
<svg style="left:22.5px;top:533.5px" width="3" height="3"><path d="M2.6 0V2.6H0Z" fill="#cdcdcd"/></svg>
<div style="left:5.1px;top:543.3px;width:21.2px;height:16.4px;background:#333;border-radius:3px"></div>
<svg style="left:11.9px;top:547.5px" width="8.7" height="8.6" viewBox="0 0 8.7 8.6"><rect x="0.5" y="0.5" width="7.7" height="7.6" fill="#4a4a4a" stroke="#c0c0c0" stroke-width="1"/><path d="M0.5 2H8.2" stroke="#c0c0c0" stroke-width="1"/></svg>
<svg style="left:22.5px;top:556.5px" width="3" height="3"><path d="M2.6 0V2.6H0Z" fill="#cdcdcd"/></svg>
<svg style="left:1013px;top:77px" width="7" height="4" viewBox="0 0 7 4"><path d="M3 0.3L0.8 2L3 3.7M6.3 0.3L4.1 2L6.3 3.7" fill="none" stroke="#a8a8a8" stroke-width="0.9"/></svg>
<svg style="left:951px;top:86.3px" width="15.400000000000002" height="3" viewBox="0 0 15.400000000000002 3"><rect x="0.0" y="0" width="1.3" height="2.6" fill="#3a3a3a"/><rect x="2.2" y="0" width="1.3" height="2.6" fill="#3a3a3a"/><rect x="4.4" y="0" width="1.3" height="2.6" fill="#3a3a3a"/><rect x="6.6000000000000005" y="0" width="1.3" height="2.6" fill="#3a3a3a"/><rect x="8.8" y="0" width="1.3" height="2.6" fill="#3a3a3a"/><rect x="11.0" y="0" width="1.3" height="2.6" fill="#3a3a3a"/><rect x="13.200000000000001" y="0" width="1.3" height="2.6" fill="#3a3a3a"/></svg>
<div style="left:899.1px;top:93.3px;width:120px;height:16.5px;background:#383838;border-radius:3px"></div>
<svg style="left:902.9px;top:94.9px" width="14" height="15" viewBox="0 0 14 15"><path d="M0 3.5L1.8 2H6V13.5H0Z M14 3.5L12.2 2H8V13.5H14Z" fill="#cdcdcd"/><rect x="6.4" y="0" width="1.2" height="15" fill="#cdcdcd"/></svg>
<svg style="left:903.1px;top:117px" width="14" height="14" viewBox="0 0 14 14"><path d="M7 0L14 4.2L7 8.4L0 4.2Z" fill="#cdcdcd"/><path d="M1.8 7L0 8.2L7 13L14 8.2L12.2 7L7 10.2Z" fill="#cdcdcd"/></svg>
<svg style="left:902.3px;top:142.5px" width="15.5" height="7.5" viewBox="0 0 15.5 7.5"><rect x="0.7" y="0.7" width="8.5" height="6" rx="3" fill="none" stroke="#cdcdcd" stroke-width="1.3"/><rect x="6.3" y="0.7" width="8.5" height="6" rx="3" fill="none" stroke="#cdcdcd" stroke-width="1.3"/></svg>
<div style="left:894px;top:158.8px;width:130px;height:1.3px;background:#3f3f3f"></div>
<svg style="left:951px;top:162.4px" width="15.400000000000002" height="3" viewBox="0 0 15.400000000000002 3"><rect x="0.0" y="0" width="1.3" height="2.6" fill="#3a3a3a"/><rect x="2.2" y="0" width="1.3" height="2.6" fill="#3a3a3a"/><rect x="4.4" y="0" width="1.3" height="2.6" fill="#3a3a3a"/><rect x="6.6000000000000005" y="0" width="1.3" height="2.6" fill="#3a3a3a"/><rect x="8.8" y="0" width="1.3" height="2.6" fill="#3a3a3a"/><rect x="11.0" y="0" width="1.3" height="2.6" fill="#3a3a3a"/><rect x="13.200000000000001" y="0" width="1.3" height="2.6" fill="#3a3a3a"/></svg>
<svg style="left:902.9px;top:172.8px" width="14" height="10" viewBox="0 0 14 10"><rect x="0" y="0" width="14" height="0.8" fill="#cdcdcd"/><rect x="0" y="3.2" width="14" height="1.6" fill="#cdcdcd"/><rect x="0" y="7.3" width="14" height="2.4" fill="#cdcdcd"/></svg>
<svg style="left:902.3px;top:193.7px" width="15.5" height="11.5" viewBox="0 0 15.5 11.5"><path d="M8.5 0.3C12.5 0.3 15.3 2.8 15.3 5.8C15.3 9 12 11.3 7.5 11.3C3 11.3 0.2 9.5 0.2 7.5C0.2 5.5 3 5.8 3.5 4.5C4 2.5 5 0.3 8.5 0.3Z" fill="#cdcdcd"/><circle cx="3" cy="8.2" r="0.9" fill="#535353"/><circle cx="5.5" cy="9" r="0.9" fill="#535353"/><circle cx="8.2" cy="8.8" r="0.9" fill="#535353"/><circle cx="10.8" cy="7.5" r="0.9" fill="#535353"/><circle cx="11.5" cy="4.3" r="0.9" fill="#535353"/></svg>
<div style="left:894px;top:212.8px;width:130px;height:1.3px;background:#3f3f3f"></div>
<svg style="left:951px;top:216.2px" width="15.400000000000002" height="3" viewBox="0 0 15.400000000000002 3"><rect x="0.0" y="0" width="1.3" height="2.6" fill="#3a3a3a"/><rect x="2.2" y="0" width="1.3" height="2.6" fill="#3a3a3a"/><rect x="4.4" y="0" width="1.3" height="2.6" fill="#3a3a3a"/><rect x="6.6000000000000005" y="0" width="1.3" height="2.6" fill="#3a3a3a"/><rect x="8.8" y="0" width="1.3" height="2.6" fill="#3a3a3a"/><rect x="11.0" y="0" width="1.3" height="2.6" fill="#3a3a3a"/><rect x="13.200000000000001" y="0" width="1.3" height="2.6" fill="#3a3a3a"/></svg>
<svg style="left:902.9px;top:227.6px" width="13.5" height="9.5" viewBox="0 0 13.5 9.5"><rect width="13.5" height="9.5" fill="#bdbdbd"/><rect x="1" y="1" width="3" height="3" fill="#8a8a8a"/><rect x="5.2" y="1" width="3" height="3" fill="#d8d8d8"/><rect x="9.5" y="1" width="3" height="3" fill="#7a7a7a"/><rect x="1" y="5.3" width="3" height="3" fill="#7a7a7a"/><rect x="5.2" y="5.3" width="3" height="3" fill="#959595"/><rect x="9.5" y="5.3" width="3" height="3" fill="#d0d0d0"/></svg>
<div style="left:894px;top:244.8px;width:130px;height:1.3px;background:#3f3f3f"></div>
<div style="left:881.9px;top:300px;width:10px;height:103.4px;background:#686868;border-radius:0 0 5px 5px"></div>
<svg style="left:883.5px;top:756.6px" width="7" height="4.5" viewBox="0 0 7 4.5"><path d="M0.5 0.5L3.5 3.5L6.5 0.5" fill="none" stroke="#9a9a9a" stroke-width="1"/></svg>
<div style="left:496px;top:766.3px;width:255.6px;height:10.6px;background:#646464;border-radius:5.3px"></div>
<svg style="left:389.5px;top:767.5px" width="4" height="7" viewBox="0 0 4 7"><path d="M3.5 0.5L0.5 3.5L3.5 6.5" fill="none" stroke="#8a8a8a" stroke-width="1"/></svg>
<svg style="left:854.8px;top:767.5px" width="4" height="7" viewBox="0 0 4 7"><path d="M0.5 0.5L3.5 3.5L0.5 6.5" fill="none" stroke="#8a8a8a" stroke-width="1"/></svg>
<div style="left:863px;top:765px;width:18px;height:13px;background:#4e4e4e"></div>
<svg style="left:866.5px;top:767.4px" width="12.5" height="8.5" viewBox="0 0 12.5 8.5"><rect x="0.5" y="0.5" width="11.5" height="7.5" fill="none" stroke="#c8c8c8" stroke-width="1"/><path d="M6.25 0.5V8" stroke="#c8c8c8" stroke-width="1"/></svg>
<svg style="left:883px;top:767px" width="9" height="9" viewBox="0 0 9 9"><path d="M8.5 1L1 8.5M8.5 4L4 8.5M8.5 7L7 8.5" stroke="#5e5e5e" stroke-width="0.9"/></svg>
<svg style="left:42px;top:767.8px" width="7" height="7" viewBox="0 0 7 7"><rect x="0" y="0" width="1.3" height="7" fill="#7a7a7a"/><path d="M6.6 0V7L2 3.5Z" fill="#7a7a7a"/></svg>
<svg style="left:59.3px;top:767.8px" width="4" height="7" viewBox="0 0 4 7"><path d="M3.8 0V7L0 3.5Z" fill="#7a7a7a"/></svg>
<div style="left:74.5px;top:765.6px;width:68.8px;height:11.8px;background:#3e3e3e;border:1px solid #5e5e5e;border-radius:2px"></div>
<div style="left:129.6px;top:766.6px;width:1px;height:9.8px;background:#5e5e5e"></div>
<svg style="left:133.5px;top:769.5px" width="6.5" height="4" viewBox="0 0 6.5 4"><path d="M0.5 0.5L3.25 3.2L6 0.5" fill="none" stroke="#d0d0d0" stroke-width="1.1"/></svg>
<svg style="left:155px;top:767.8px" width="4" height="7" viewBox="0 0 4 7"><path d="M0 0V7L3.8 3.5Z" fill="#cfcfcf"/></svg>
<svg style="left:168.7px;top:767.8px" width="7.3" height="7" viewBox="0 0 7.3 7"><path d="M0 0V7L4.6 3.5Z" fill="#cfcfcf"/><rect x="6" y="0" width="1.3" height="7" fill="#cfcfcf"/></svg>
<svg style="left:0;top:0" width="210" height="778"><path d="M191.5 774.3A4.1 4.1 0 1 1 196.3 774.3" fill="none" stroke="#c4c4c4" stroke-width="1.9"/><path d="M194 767.6H195.5A3 3 0 0 1 197.2 770.9H194Z" fill="#c4c4c4"/><rect x="200.2" y="774.3" width="1.5" height="1.5" fill="#9a9a9a"/></svg>
<svg style="left:294.3px;top:769px" width="5.8" height="3.8" viewBox="0 0 5.8 3.8"><path d="M0.5 0.5L2.9 3L5.3 0.5" fill="none" stroke="#cfcfcf" stroke-width="1"/></svg>
<svg style="left:312.1px;top:767px" width="8.6" height="8.6" viewBox="0 0 8.6 8.6"><circle cx="4.3" cy="4.3" r="4.2" fill="#3db346"/></svg>
<svg style="left:374.4px;top:769px" width="5.8" height="3.8" viewBox="0 0 5.8 3.8"><path d="M0.5 0.5L2.9 3L5.3 0.5" fill="none" stroke="#cfcfcf" stroke-width="1"/></svg>
<div class="t" style="left:118.8px;top:8.43px;font-size:10.8px;line-height:normal;font-weight:normal;color:#ececec;font-family:'Liberation Sans';transform:scaleX(0.8852);transform-origin:0 0;">57.5%</div>
<div class="t" style="left:449.8px;top:6.63px;font-size:10.8px;line-height:normal;font-weight:normal;color:#dedede;font-family:'Liberation Sans';transform:scaleX(0.9359);transform-origin:0 0;">Adobe InDesign CC 2018</div>
<div class="t" style="left:743.4px;top:7.24px;font-size:11px;line-height:normal;font-weight:bold;color:#ececec;font-family:'Liberation Sans';transform:scaleX(0.8571);transform-origin:0 0;">Publish Online</div>
<div class="t" style="left:831.3px;top:6.65px;font-size:11px;line-height:normal;font-weight:bold;color:#e6e6e6;font-family:'Liberation Sans';transform:scaleX(0.8894);transform-origin:0 0;">Essentials</div>
<div class="t" style="left:931px;top:6.50px;font-size:10.5px;line-height:normal;font-weight:normal;color:#7e7e7e;font-family:'Liberation Sans';transform:scaleX(0.7860);transform-origin:0 0;">Adobe Stock</div>
<div class="t" style="left:50.7px;top:34.60px;font-size:10.5px;line-height:normal;font-weight:bold;color:#e6e6e6;font-family:'Liberation Sans';transform:scaleX(0.7524);transform-origin:0 0;">X:</div>
<div class="t" style="left:50.7px;top:54.60px;font-size:10.5px;line-height:normal;font-weight:bold;color:#e6e6e6;font-family:'Liberation Sans';transform:scaleX(0.8127);transform-origin:0 0;">Y:</div>
<div class="t" style="left:139.2px;top:34.60px;font-size:10.5px;line-height:normal;font-weight:bold;color:#e6e6e6;font-family:'Liberation Sans';transform:scaleX(0.6961);transform-origin:0 0;">W:</div>
<div class="t" style="left:140px;top:54.60px;font-size:10.5px;line-height:normal;font-weight:bold;color:#e6e6e6;font-family:'Liberation Sans';transform:scaleX(0.7040);transform-origin:0 0;">H:</div>
<div class="t" style="left:78.7px;top:34.10px;font-size:10.5px;line-height:normal;font-weight:normal;color:#8c8c8c;font-family:'Liberation Sans';transform:scaleX(0.8393);transform-origin:0 0;">29p11.1</div>
<div class="t" style="left:78.7px;top:54.10px;font-size:10.5px;line-height:normal;font-weight:normal;color:#8c8c8c;font-family:'Liberation Sans';transform:scaleX(0.8348);transform-origin:0 0;">61p0</div>
<div class="t" style="left:636px;top:34.50px;font-size:10.5px;line-height:normal;font-weight:normal;color:#ececec;font-family:'Liberation Sans';transform:scaleX(0.8451);transform-origin:0 0;">1 pt</div>
<div class="t" style="left:715.5px;top:54.50px;font-size:10.5px;line-height:normal;font-weight:normal;color:#ececec;font-family:'Liberation Sans';transform:scaleX(0.7522);transform-origin:0 0;">100%</div>
<div class="t" style="left:858.8px;top:34.10px;font-size:10.5px;line-height:normal;font-weight:normal;color:#ececec;font-family:'Liberation Sans';transform:scaleX(0.7706);transform-origin:0 0;">1p0</div>
<div class="t" style="left:57px;top:78.70px;font-size:10.5px;line-height:normal;font-weight:bold;color:#ececec;font-family:'Liberation Sans';transform:scaleX(0.8084);transform-origin:0 0;">*unity.indd @ 57%</div>
<div class="t" style="left:165.4px;top:78.70px;font-size:10.5px;line-height:normal;font-weight:bold;color:#b8b8b8;font-family:'Liberation Sans';transform:scaleX(0.8700);transform-origin:0 0;">tschichold_unity.indd @ 57%</div>
<div class="t" style="left:923.8px;top:96.50px;font-size:10.5px;line-height:normal;font-weight:bold;color:#ececec;font-family:'Liberation Sans';transform:scaleX(0.8307);transform-origin:0 0;">Pages</div>
<div class="t" style="left:923.8px;top:118.40px;font-size:10.5px;line-height:normal;font-weight:bold;color:#ececec;font-family:'Liberation Sans';transform:scaleX(0.8358);transform-origin:0 0;">Layers</div>
<div class="t" style="left:923.8px;top:139.90px;font-size:10.5px;line-height:normal;font-weight:bold;color:#ececec;font-family:'Liberation Sans';transform:scaleX(0.8460);transform-origin:0 0;">Links</div>
<div class="t" style="left:923.8px;top:172.40px;font-size:10.5px;line-height:normal;font-weight:bold;color:#ececec;font-family:'Liberation Sans';transform:scaleX(0.8568);transform-origin:0 0;">Stroke</div>
<div class="t" style="left:923.8px;top:194.40px;font-size:10.5px;line-height:normal;font-weight:bold;color:#ececec;font-family:'Liberation Sans';transform:scaleX(0.8572);transform-origin:0 0;">Color</div>
<div class="t" style="left:923.8px;top:226.10px;font-size:10.5px;line-height:normal;font-weight:bold;color:#ececec;font-family:'Liberation Sans';transform:scaleX(0.8340);transform-origin:0 0;">Swatches</div>
<div class="t" style="left:76.9px;top:764.80px;font-size:10.5px;line-height:normal;font-weight:normal;color:#e8e8e8;font-family:'Liberation Sans';">1</div>
<div class="t" style="left:213.9px;top:764.60px;font-size:10.5px;line-height:normal;font-weight:normal;color:#dcdcdc;font-family:'Liberation Sans';transform:scaleX(0.8028);transform-origin:0 0;">[Basic] (working)</div>
<div class="t" style="left:325.6px;top:764.60px;font-size:10.5px;line-height:normal;font-weight:normal;color:#dcdcdc;font-family:'Liberation Sans';transform:scaleX(0.7976);transform-origin:0 0;">No errors</div>
<div style="left:730.2px;top:82.2px;width:162.89999999999998px;height:310.8px;background:#535353;border:1px solid #333"></div>
<div style="left:731.2px;top:83.3px;width:160.89999999999998px;height:1.3px;background:#3a3a3a"></div>
<div style="left:779.5px;top:84.6px;width:112.60000000000002px;height:21.3px;background:#474747"></div>
<div style="left:811.5px;top:84.6px;width:1px;height:21.3px;background:#3c3c3c"></div>
<div style="left:842.5px;top:84.6px;width:1px;height:21.3px;background:#3c3c3c"></div>
<svg style="left:736.8px;top:93px" width="4.5" height="6.3" viewBox="0 0 4.5 6.3"><path d="M0.4 2.4L2.25 0.4L4.1 2.4M0.4 3.9L2.25 5.9L4.1 3.9" fill="none" stroke="#bdbdbd" stroke-width="0.9"/></svg>
<svg style="left:861.3px;top:93px" width="8" height="6" viewBox="0 0 8 6"><path d="M0.5 0.5L3 3L0.5 5.5M4.5 0.5L7 3L4.5 5.5" fill="none" stroke="#e0e0e0" stroke-width="1.1"/></svg>
<div style="left:874.2px;top:92.3px;width:0.9px;height:7.5px;background:#c0c0c0"></div>
<svg style="left:880.4px;top:92.3px" width="8.5" height="6" viewBox="0 0 8.5 6"><path d="M0 0.5H8.5M0 3H8.5M0 5.5H8.5" stroke="#c8c8c8" stroke-width="1"/></svg>
<div style="left:862.1px;top:109.2px;width:14.1px;height:18.3px;background:#fff"></div>
<div style="left:862.1px;top:132.1px;width:14.1px;height:17.6px;background:#fff"></div>
<div style="left:864px;top:136.5px;width:12.2px;height:0.9px;background:#5a4a46"></div>
<div style="left:862.1px;top:155px;width:14.1px;height:17.6px;background:#fff"></div>
<div class="t" style="left:864.3px;top:154.5px;font-size:9.5px;line-height:11px;color:#222">A</div>
<div style="left:870.5px;top:160px;width:4px;height:0.7px;background:#bbb"></div>
<div style="left:731.2px;top:186.4px;width:160.89999999999998px;height:1.5px;background:#474747"></div>
<svg style="left:750.8px;top:192px" width="7.7" height="3.8" viewBox="0 0 7.7 3.8"><path d="M0 0H7.7L3.85 3.8Z" fill="#d8d8d8"/></svg>
<div style="left:743.9px;top:197px;width:22px;height:27.4px;background:#9fc7f5"></div>
<div style="left:751.5px;top:198px;width:6.5px;height:7px;background:#fff"></div>
<div class="t" style="left:751.2px;top:196px;font-size:9.5px;line-height:11px;color:#111">A</div>
<div style="left:746px;top:204.5px;width:19px;height:0.8px;background:#2a5fa8"></div>
<div style="left:746px;top:208.5px;width:19px;height:0.5px;background:#7aa6dd"></div>
<div style="left:750px;top:211px;width:0.8px;height:1px;background:#456"></div>
<div style="left:750px;top:213px;width:0.8px;height:1px;background:#456"></div>
<div style="left:750px;top:215px;width:0.8px;height:1px;background:#456"></div>
<div style="left:750px;top:217px;width:0.8px;height:1.5px;background:#456"></div>
<div style="left:750px;top:219.5px;width:0.8px;height:1.5px;background:#456"></div>
<div style="left:759.5px;top:213.5px;width:0.8px;height:2.5px;background:#345"></div>
<div style="left:749px;top:229px;width:8.8px;height:10.8px;background:#2d7fe6"></div>
<div style="left:743.9px;top:247px;width:22px;height:27.4px;background:#fff"></div>
<div class="t" style="left:751.5px;top:246px;font-size:9.5px;line-height:11px;color:#222">B</div>
<div style="left:746px;top:254.5px;width:19px;height:0.6px;background:#c9b9b9"></div>
<div style="left:731.2px;top:366.4px;width:160.89999999999998px;height:1px;background:#4a4a4a"></div>
<svg style="left:819px;top:373px" width="14" height="9.5" viewBox="0 0 14 9.5"><rect x="0.5" y="3.3" width="7.5" height="5.7" fill="none" stroke="#cdcdcd" stroke-width="1"/><path d="M4.5 3.3V0.5H10.8V6.5H8" fill="none" stroke="#cdcdcd" stroke-width="1"/><path d="M11.8 8.5h2l-1 1z" fill="#cdcdcd"/></svg>
<svg style="left:844.2px;top:373px" width="8" height="7.8" viewBox="0 0 8 7.8"><path d="M0 0H8V7.8H2.5L0 5.3Z" fill="#cdcdcd"/><path d="M0 5.3H2.5V7.8" fill="none" stroke="#535353" stroke-width="0.8"/></svg>
<svg style="left:866px;top:372px" width="8.5" height="10" viewBox="0 0 8.5 10"><path d="M0 1.8H8.5M3 1.8V0.5H5.5V1.8M1.2 2.5V9.5H7.3V2.5M3.2 3.5V8.5M5.3 3.5V8.5" fill="none" stroke="#8e8e8e" stroke-width="1"/></svg>
<div style="left:731.2px;top:385.7px;width:160.89999999999998px;height:2.5px;background:#3a3a3a"></div>
<div style="left:731.2px;top:388.2px;width:160.89999999999998px;height:4px;background:#474747"></div>
<svg style="left:804px;top:389px" width="15.400000000000002" height="3" viewBox="0 0 15.400000000000002 3"><rect x="0.0" y="0" width="1.3" height="2.6" fill="#363636"/><rect x="2.2" y="0" width="1.3" height="2.6" fill="#363636"/><rect x="4.4" y="0" width="1.3" height="2.6" fill="#363636"/><rect x="6.6000000000000005" y="0" width="1.3" height="2.6" fill="#363636"/><rect x="8.8" y="0" width="1.3" height="2.6" fill="#363636"/><rect x="11.0" y="0" width="1.3" height="2.6" fill="#363636"/><rect x="13.200000000000001" y="0" width="1.3" height="2.6" fill="#363636"/></svg>
<div class="t" style="left:745.1px;top:89.30px;font-size:10.5px;line-height:normal;font-weight:bold;color:#ececec;font-family:'Liberation Sans';transform:scaleX(0.8307);transform-origin:0 0;">Pages</div>
<div class="t" style="left:733.5px;top:109.20px;font-size:10.5px;line-height:normal;font-weight:normal;color:#dcdcdc;font-family:'Liberation Sans';transform:scaleX(0.7887);transform-origin:0 0;">[None]</div>
<div class="t" style="left:733.5px;top:132.30px;font-size:10.5px;line-height:normal;font-weight:normal;color:#dcdcdc;font-family:'Liberation Sans';transform:scaleX(0.8265);transform-origin:0 0;">A-Master</div>
<div class="t" style="left:733.5px;top:155.10px;font-size:10.5px;line-height:normal;font-weight:normal;color:#dcdcdc;font-family:'Liberation Sans';transform:scaleX(0.8030);transform-origin:0 0;">B-Master</div>
<div class="t" style="left:735.1px;top:371.20px;font-size:10.5px;line-height:normal;font-weight:normal;color:#dcdcdc;font-family:'Liberation Sans';transform:scaleX(0.7779);transform-origin:0 0;">2 Pages in 2 Spreads</div>
<div class="t" style="left:751px;top:229.15px;font-size:10px;line-height:normal;font-weight:normal;color:#ffffff;font-family:'Liberation Sans';">1</div>
<div class="t" style="left:751px;top:279.45px;font-size:10px;line-height:normal;font-weight:normal;color:#dcdcdc;font-family:'Liberation Sans';">2</div>
<div class="t" style="left:789.1px;top:89.30px;font-size:10.5px;line-height:normal;font-weight:bold;color:#bdbdbd;font-family:'Liberation Sans';transform:scaleX(0.9000);transform-origin:0 0;clip-path:inset(0 20% 0 0)">Layers</div>
<div class="t" style="left:820.6px;top:89.30px;font-size:10.5px;line-height:normal;font-weight:bold;color:#bdbdbd;font-family:'Liberation Sans';transform:scaleX(0.9000);transform-origin:0 0;clip-path:inset(0 12% 0 0)">Links</div>
<svg style="left:43.5px;top:81.5px" width="7" height="7"><path d="M0.8 0.8L6.2 6.2M6.2 0.8L0.8 6.2" stroke="#d8d8d8" stroke-width="1.2"/></svg>
<svg style="left:152px;top:81.5px" width="7" height="7"><path d="M0.8 0.8L6.2 6.2M6.2 0.8L0.8 6.2" stroke="#b0b0b0" stroke-width="1.2"/></svg>
<div style="left:224px;top:23px;width:82px;height:122.5px;background:#535353;box-shadow:0 3px 8px rgba(0,0,0,0.3);border:1px solid #4a4a4a;border-top:none"></div>
<div style="left:225px;top:48.2px;width:80px;height:22.7px;background:#5c5c5c"></div>
<div style="left:228px;top:118.5px;width:74px;height:1px;background:#474747"></div>
<svg style="left:230.8px;top:55px" width="9" height="8" viewBox="0 0 9 8"><path d="M0.7 4.2L3.2 7L8.3 0.6" fill="none" stroke="#e0e0e0" stroke-width="1.4"/></svg>
<div class="t" style="left:243.9px;top:31.30px;font-size:10.5px;line-height:normal;font-weight:bold;color:#e8e8e8;font-family:'Liberation Sans';transform:scaleX(0.8956);transform-origin:0 0;">Normal</div>
<div class="t" style="left:243.9px;top:54.10px;font-size:10.5px;line-height:normal;font-weight:bold;color:#e8e8e8;font-family:'Liberation Sans';transform:scaleX(0.8641);transform-origin:0 0;">Preview</div>
<div class="t" style="left:243.9px;top:76.20px;font-size:10.5px;line-height:normal;font-weight:bold;color:#e8e8e8;font-family:'Liberation Sans';transform:scaleX(0.8219);transform-origin:0 0;">Bleed</div>
<div class="t" style="left:243.9px;top:99.10px;font-size:10.5px;line-height:normal;font-weight:bold;color:#e8e8e8;font-family:'Liberation Sans';transform:scaleX(0.8308);transform-origin:0 0;">Slug</div>
<div class="t" style="left:243.9px;top:126.30px;font-size:10.5px;line-height:normal;font-weight:bold;color:#e8e8e8;font-family:'Liberation Sans';transform:scaleX(0.8789);transform-origin:0 0;">Presentation</div>

</body></html>
